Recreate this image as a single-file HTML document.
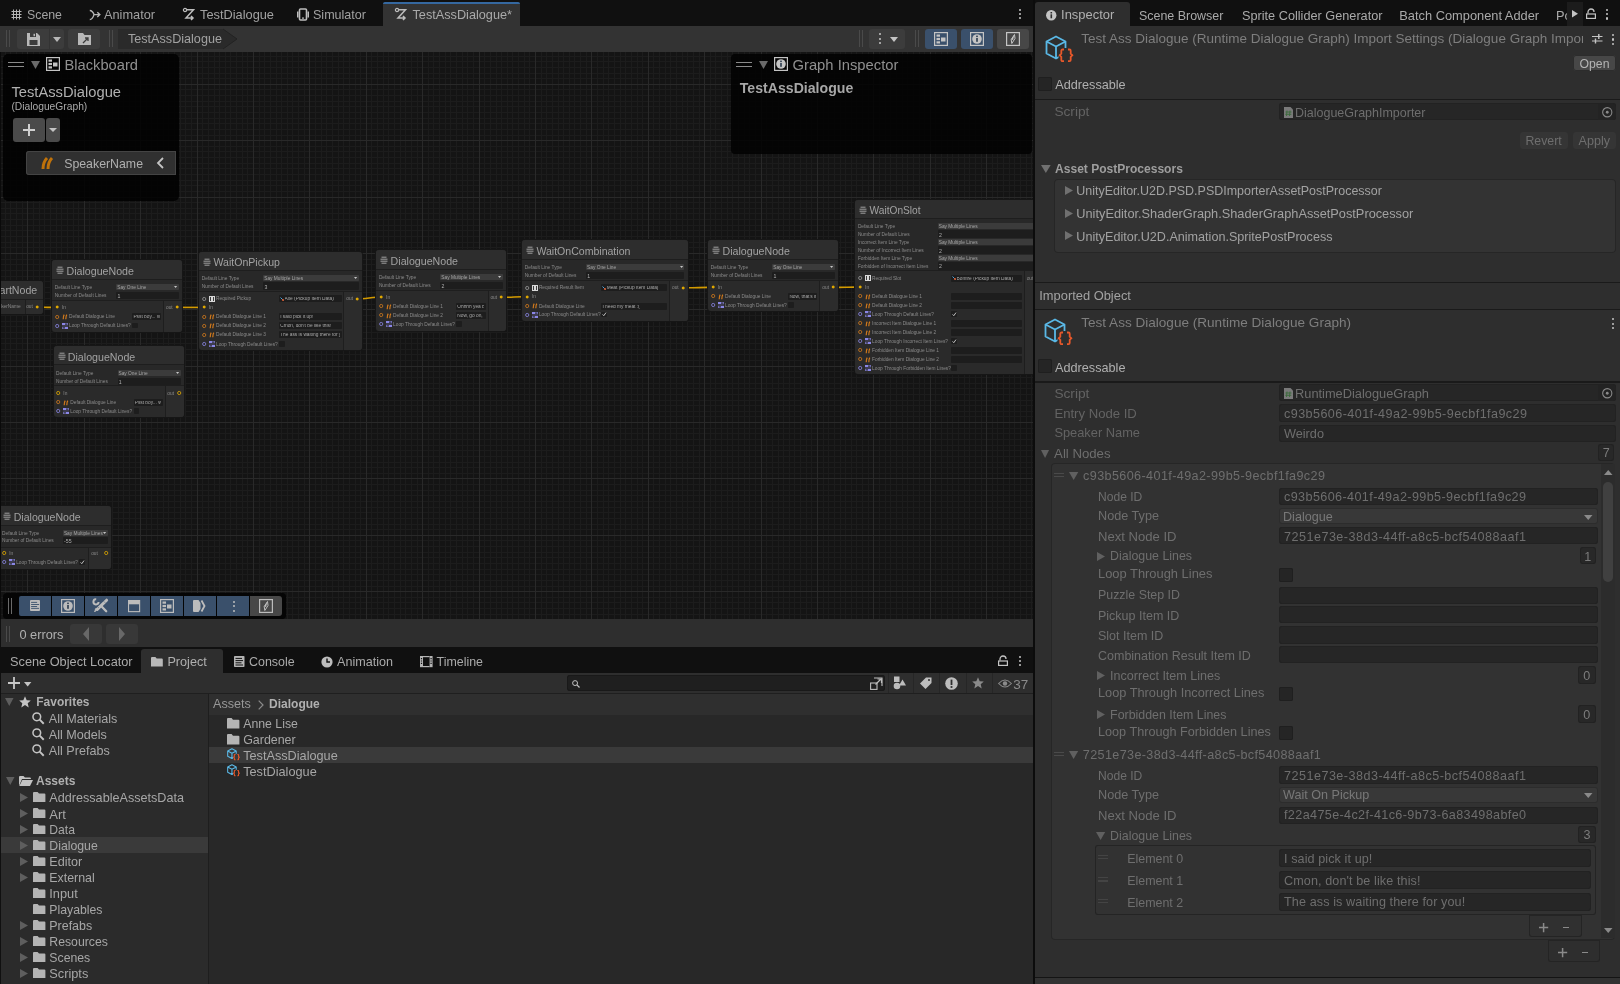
<!DOCTYPE html><html><head><meta charset="utf-8"><style>
html,body{margin:0;padding:0;width:1620px;height:984px;overflow:hidden;background:#101010}
.a{position:absolute;box-sizing:border-box}
.t{position:absolute;white-space:nowrap;font-family:"Liberation Sans",sans-serif}
svg.a{overflow:visible}
</style></head><body>
<div class="a" style="left:0;top:0;width:1620px;height:984px;overflow:hidden;will-change:transform">
<div class="a" style="left:0px;top:0px;width:1033px;height:26px;background:#101010;"></div>
<div class="a" style="left:383px;top:2px;width:137px;height:24px;background:#333333;border-radius:3px 3px 0 0;"></div>
<div class="a" style="left:383px;top:2px;width:137px;height:1.8px;background:#3568a0;border-radius:3px 3px 0 0;"></div>
<div class="t" style="top:9.40px;font-size:12.34px;line-height:12.34px;color:#a2a2a2;left:27px;">Scene</div>
<div class="t" style="top:9.08px;font-size:12.75px;line-height:12.75px;color:#a2a2a2;left:104px;">Animator</div>
<div class="t" style="top:9.04px;font-size:12.8px;line-height:12.8px;color:#a2a2a2;left:200px;">TestDialogue</div>
<div class="t" style="top:9.24px;font-size:12.55px;line-height:12.55px;color:#a2a2a2;left:313px;">Simulator</div>
<div class="t" style="top:9.12px;font-size:12.7px;line-height:12.7px;color:#aaaaaa;left:412.5px;">TestAssDialogue*</div>
<svg class="a" style="left:11px;top:9px;" width="11" height="11" viewBox="0 0 11 11"><path d="M2.5 0.5v10M5.5 0.5v10M8.5 0.5v10M0.5 2.5h10M0.5 5.5h10M0.5 8.5h10" stroke="#b4b4b4" stroke-width="1" fill="none"/></svg>
<svg class="a" style="left:89px;top:9px;" width="12" height="12" viewBox="0 0 12 12"><path d="M0.8 1.5Q3.5 1.5 5 5.6H10.5M0.8 10.5Q3.5 10.5 5 5.6M8.3 3.3 10.8 5.6 8.3 7.9" stroke="#b4b4b4" stroke-width="1.4" fill="none"/></svg>
<svg class="a" style="left:183px;top:8px;" width="12" height="13" viewBox="0 0 12 13"><circle cx="2" cy="2" r="1.6" stroke="#bdbdbd" stroke-width="1.2" fill="none"/><path d="M4 1.8h6.5L3 10h6.5M8 8l2 2-2 2" stroke="#bdbdbd" stroke-width="1.5" fill="none"/></svg>
<svg class="a" style="left:395px;top:8px;" width="12" height="13" viewBox="0 0 12 13"><circle cx="2" cy="2" r="1.6" stroke="#bdbdbd" stroke-width="1.2" fill="none"/><path d="M4 1.8h6.5L3 10h6.5M8 8l2 2-2 2" stroke="#bdbdbd" stroke-width="1.5" fill="none"/></svg>
<svg class="a" style="left:297px;top:8px;" width="12" height="13" viewBox="0 0 12 13"><rect x="2.5" y="1" width="7" height="11" rx="1" stroke="#bdbdbd" stroke-width="1.6" fill="none"/><rect x="0" y="3.5" width="1.5" height="6" fill="#bdbdbd"/><rect x="10.5" y="3.5" width="1.5" height="6" fill="#bdbdbd"/><rect x="5" y="9.5" width="2" height="1.2" fill="#bdbdbd"/></svg>
<div class="a" style="left:1018.5px;top:9px;width:2.2px;height:2.2px;background:#c4c4c4;border-radius:1px;"></div>
<div class="a" style="left:1018.5px;top:13px;width:2.2px;height:2.2px;background:#c4c4c4;border-radius:1px;"></div>
<div class="a" style="left:1018.5px;top:17px;width:2.2px;height:2.2px;background:#c4c4c4;border-radius:1px;"></div>
<div class="a" style="left:0px;top:26px;width:1033px;height:26px;background:#333333;"></div>
<div class="a" style="left:6px;top:30px;width:1px;height:17px;background:#4a4a4a;"></div>
<div class="a" style="left:9px;top:30px;width:1px;height:17px;background:#4a4a4a;"></div>
<div class="a" style="left:17px;top:29px;width:32px;height:20px;background:#3c3c3c;border-radius:3px 0 0 3px;"></div>
<div class="a" style="left:50px;top:29px;width:14px;height:20px;background:#3c3c3c;border-radius:0 3px 3px 0;"></div>
<div class="a" style="left:68px;top:29px;width:32px;height:20px;background:#3c3c3c;border-radius:3px;"></div>
<svg class="a" style="left:27px;top:33px;" width="13" height="13" viewBox="0 0 13 13"><path d="M0 0h10l3 3v10H0z" fill="#b8b8b8"/><rect x="3" y="0" width="6" height="4" fill="#3c3c3c"/><rect x="6.5" y="0.8" width="1.5" height="2.4" fill="#b8b8b8"/><rect x="2.5" y="7" width="8" height="5" fill="#3c3c3c"/></svg>
<svg class="a" style="left:53px;top:37px;" width="8" height="5" viewBox="0 0 8 5"><path d="M0 0h8L4 5z" fill="#b8b8b8"/></svg>
<svg class="a" style="left:78px;top:33px;" width="13" height="12" viewBox="0 0 13 12"><path d="M0 0h5l1.5 2H13v10H0z" fill="#b8b8b8"/><path d="M5 10 10 5M7 5h3v3" stroke="#3c3c3c" stroke-width="1.3" fill="none"/></svg>
<div class="a" style="left:109px;top:30px;width:1px;height:17px;background:#4a4a4a;"></div>
<div class="a" style="left:112px;top:30px;width:1px;height:17px;background:#4a4a4a;"></div>
<svg class="a" style="left:118px;top:29px;" width="120" height="20" viewBox="0 0 120 20"><path d="M0 0h105l14 10-14 10H0z" fill="#2a2a2a"/><path d="M105 0l14 10-14 10" stroke="#222" fill="none"/></svg>
<div class="t" style="top:33.28px;font-size:12.62px;line-height:12.62px;color:#a2a2a2;left:128px;">TestAssDialogue</div>
<div class="a" style="left:859px;top:30px;width:1px;height:17px;background:#4a4a4a;"></div>
<div class="a" style="left:862px;top:30px;width:1px;height:17px;background:#4a4a4a;"></div>
<div class="a" style="left:869px;top:29px;width:36px;height:20px;background:#3c3c3c;border-radius:3px;"></div>
<div class="a" style="left:879px;top:33px;width:2.2px;height:2.2px;background:#c4c4c4;border-radius:1px;"></div>
<div class="a" style="left:879px;top:37.5px;width:2.2px;height:2.2px;background:#c4c4c4;border-radius:1px;"></div>
<div class="a" style="left:879px;top:42px;width:2.2px;height:2.2px;background:#c4c4c4;border-radius:1px;"></div>
<svg class="a" style="left:890px;top:37px;" width="8" height="5" viewBox="0 0 8 5"><path d="M0 0h8L4 5z" fill="#c4c4c4"/></svg>
<div class="a" style="left:915px;top:30px;width:1px;height:17px;background:#4a4a4a;"></div>
<div class="a" style="left:918px;top:30px;width:1px;height:17px;background:#4a4a4a;"></div>
<div class="a" style="left:925px;top:29px;width:32px;height:20px;background:#3a506b;border-radius:3px;"></div>
<div class="a" style="left:961px;top:29px;width:32px;height:20px;background:#3a506b;border-radius:3px;"></div>
<div class="a" style="left:997px;top:29px;width:32px;height:20px;background:#474747;border-radius:3px;"></div>
<svg class="a" style="left:934px;top:32px;" width="14" height="14" viewBox="0 0 14 14"><g transform="scale(1.0)"><rect x="0.6" y="0.6" width="12.8" height="12.8" stroke="#c4c4c4" stroke-width="1.2" fill="none"/><rect x="2.5" y="2.5" width="3.5" height="2.2" fill="#c4c4c4"/><rect x="2.5" y="5.9" width="3.5" height="2.2" fill="#c4c4c4"/><rect x="2.5" y="9.3" width="3.5" height="2.2" fill="#c4c4c4"/><rect x="7" y="5.5" width="4.5" height="4" fill="#c4c4c4"/></g></svg>
<svg class="a" style="left:970px;top:32px;" width="14" height="14" viewBox="0 0 14 14"><g transform="scale(1.0)"><rect x="0.6" y="0.6" width="12.8" height="12.8" stroke="#c4c4c4" stroke-width="1.2" fill="none"/><circle cx="7" cy="7" r="4.8" fill="#c4c4c4"/><rect x="6.2" y="6" width="1.6" height="3.8" fill="#2a3a4c"/><rect x="6.2" y="3.6" width="1.6" height="1.5" fill="#2a3a4c"/></g></svg>
<svg class="a" style="left:1006px;top:32px;" width="14" height="14" viewBox="0 0 14 14"><g transform="scale(1.0)"><rect x="0.6" y="0.6" width="12.8" height="12.8" stroke="#c4c4c4" stroke-width="1.2" fill="none"/><path d="M8.5 2.5 5.2 7.5 5.8 11.5 9 6.5z" fill="none" stroke="#c4c4c4" stroke-width="1"/><path d="M8.5 2.5 5.2 7.5 7 8z" fill="#c4c4c4"/></g></svg>
<svg class="a" style="left:1px;top:52px;shape-rendering:crispEdges;" width="1032" height="567" viewBox="0 0 1032 567"><rect x="0" y="0" width="1032" height="567" fill="#141414"/><path fill="#1c1c1c" d="M4 0h1v567h-1zM9 0h1v567h-1zM15 0h1v567h-1zM21 0h1v567h-1zM32 0h1v567h-1zM38 0h1v567h-1zM43 0h1v567h-1zM49 0h1v567h-1zM55 0h1v567h-1zM60 0h1v567h-1zM66 0h1v567h-1zM72 0h1v567h-1zM77 0h1v567h-1zM88 0h1v567h-1zM94 0h1v567h-1zM100 0h1v567h-1zM105 0h1v567h-1zM111 0h1v567h-1zM117 0h1v567h-1zM122 0h1v567h-1zM128 0h1v567h-1zM134 0h1v567h-1zM145 0h1v567h-1zM150 0h1v567h-1zM156 0h1v567h-1zM162 0h1v567h-1zM167 0h1v567h-1zM173 0h1v567h-1zM179 0h1v567h-1zM184 0h1v567h-1zM190 0h1v567h-1zM201 0h1v567h-1zM207 0h1v567h-1zM213 0h1v567h-1zM218 0h1v567h-1zM224 0h1v567h-1zM229 0h1v567h-1zM235 0h1v567h-1zM241 0h1v567h-1zM246 0h1v567h-1zM258 0h1v567h-1zM263 0h1v567h-1zM269 0h1v567h-1zM275 0h1v567h-1zM280 0h1v567h-1zM286 0h1v567h-1zM291 0h1v567h-1zM297 0h1v567h-1zM303 0h1v567h-1zM314 0h1v567h-1zM320 0h1v567h-1zM325 0h1v567h-1zM331 0h1v567h-1zM337 0h1v567h-1zM342 0h1v567h-1zM348 0h1v567h-1zM354 0h1v567h-1zM359 0h1v567h-1zM370 0h1v567h-1zM376 0h1v567h-1zM382 0h1v567h-1zM387 0h1v567h-1zM393 0h1v567h-1zM399 0h1v567h-1zM404 0h1v567h-1zM410 0h1v567h-1zM416 0h1v567h-1zM427 0h1v567h-1zM432 0h1v567h-1zM438 0h1v567h-1zM444 0h1v567h-1zM449 0h1v567h-1zM455 0h1v567h-1zM461 0h1v567h-1zM466 0h1v567h-1zM472 0h1v567h-1zM483 0h1v567h-1zM489 0h1v567h-1zM495 0h1v567h-1zM500 0h1v567h-1zM506 0h1v567h-1zM511 0h1v567h-1zM517 0h1v567h-1zM523 0h1v567h-1zM528 0h1v567h-1zM540 0h1v567h-1zM545 0h1v567h-1zM551 0h1v567h-1zM557 0h1v567h-1zM562 0h1v567h-1zM568 0h1v567h-1zM573 0h1v567h-1zM579 0h1v567h-1zM585 0h1v567h-1zM596 0h1v567h-1zM602 0h1v567h-1zM607 0h1v567h-1zM613 0h1v567h-1zM619 0h1v567h-1zM624 0h1v567h-1zM630 0h1v567h-1zM636 0h1v567h-1zM641 0h1v567h-1zM652 0h1v567h-1zM658 0h1v567h-1zM664 0h1v567h-1zM669 0h1v567h-1zM675 0h1v567h-1zM681 0h1v567h-1zM686 0h1v567h-1zM692 0h1v567h-1zM698 0h1v567h-1zM709 0h1v567h-1zM714 0h1v567h-1zM720 0h1v567h-1zM726 0h1v567h-1zM731 0h1v567h-1zM737 0h1v567h-1zM743 0h1v567h-1zM748 0h1v567h-1zM754 0h1v567h-1zM765 0h1v567h-1zM771 0h1v567h-1zM777 0h1v567h-1zM782 0h1v567h-1zM788 0h1v567h-1zM793 0h1v567h-1zM799 0h1v567h-1zM805 0h1v567h-1zM810 0h1v567h-1zM822 0h1v567h-1zM827 0h1v567h-1zM833 0h1v567h-1zM839 0h1v567h-1zM844 0h1v567h-1zM850 0h1v567h-1zM855 0h1v567h-1zM861 0h1v567h-1zM867 0h1v567h-1zM878 0h1v567h-1zM884 0h1v567h-1zM889 0h1v567h-1zM895 0h1v567h-1zM901 0h1v567h-1zM906 0h1v567h-1zM912 0h1v567h-1zM918 0h1v567h-1zM923 0h1v567h-1zM934 0h1v567h-1zM940 0h1v567h-1zM946 0h1v567h-1zM951 0h1v567h-1zM957 0h1v567h-1zM963 0h1v567h-1zM968 0h1v567h-1zM974 0h1v567h-1zM980 0h1v567h-1zM991 0h1v567h-1zM996 0h1v567h-1zM1002 0h1v567h-1zM1008 0h1v567h-1zM1013 0h1v567h-1zM1019 0h1v567h-1zM1025 0h1v567h-1zM1030 0h1v567h-1zM0 4h1032v1h-1032zM0 9h1032v1h-1032zM0 15h1032v1h-1032zM0 21h1032v1h-1032zM0 26h1032v1h-1032zM0 37h1032v1h-1032zM0 43h1032v1h-1032zM0 49h1032v1h-1032zM0 54h1032v1h-1032zM0 60h1032v1h-1032zM0 66h1032v1h-1032zM0 71h1032v1h-1032zM0 77h1032v1h-1032zM0 83h1032v1h-1032zM0 94h1032v1h-1032zM0 99h1032v1h-1032zM0 105h1032v1h-1032zM0 111h1032v1h-1032zM0 116h1032v1h-1032zM0 122h1032v1h-1032zM0 128h1032v1h-1032zM0 133h1032v1h-1032zM0 139h1032v1h-1032zM0 150h1032v1h-1032zM0 156h1032v1h-1032zM0 161h1032v1h-1032zM0 167h1032v1h-1032zM0 173h1032v1h-1032zM0 178h1032v1h-1032zM0 184h1032v1h-1032zM0 190h1032v1h-1032zM0 195h1032v1h-1032zM0 207h1032v1h-1032zM0 212h1032v1h-1032zM0 218h1032v1h-1032zM0 224h1032v1h-1032zM0 229h1032v1h-1032zM0 235h1032v1h-1032zM0 240h1032v1h-1032zM0 246h1032v1h-1032zM0 252h1032v1h-1032zM0 263h1032v1h-1032zM0 269h1032v1h-1032zM0 274h1032v1h-1032zM0 280h1032v1h-1032zM0 286h1032v1h-1032zM0 291h1032v1h-1032zM0 297h1032v1h-1032zM0 302h1032v1h-1032zM0 308h1032v1h-1032zM0 319h1032v1h-1032zM0 325h1032v1h-1032zM0 331h1032v1h-1032zM0 336h1032v1h-1032zM0 342h1032v1h-1032zM0 348h1032v1h-1032zM0 353h1032v1h-1032zM0 359h1032v1h-1032zM0 364h1032v1h-1032zM0 376h1032v1h-1032zM0 381h1032v1h-1032zM0 387h1032v1h-1032zM0 393h1032v1h-1032zM0 398h1032v1h-1032zM0 404h1032v1h-1032zM0 410h1032v1h-1032zM0 415h1032v1h-1032zM0 421h1032v1h-1032zM0 432h1032v1h-1032zM0 438h1032v1h-1032zM0 443h1032v1h-1032zM0 449h1032v1h-1032zM0 455h1032v1h-1032zM0 460h1032v1h-1032zM0 466h1032v1h-1032zM0 472h1032v1h-1032zM0 477h1032v1h-1032zM0 488h1032v1h-1032zM0 494h1032v1h-1032zM0 500h1032v1h-1032zM0 505h1032v1h-1032zM0 511h1032v1h-1032zM0 517h1032v1h-1032zM0 522h1032v1h-1032zM0 528h1032v1h-1032zM0 534h1032v1h-1032zM0 545h1032v1h-1032zM0 550h1032v1h-1032zM0 556h1032v1h-1032zM0 562h1032v1h-1032z"/><path fill="#292929" d="M26 0h1v567h-1zM83 0h1v567h-1zM139 0h1v567h-1zM196 0h1v567h-1zM252 0h1v567h-1zM308 0h1v567h-1zM365 0h1v567h-1zM421 0h1v567h-1zM478 0h1v567h-1zM534 0h1v567h-1zM590 0h1v567h-1zM647 0h1v567h-1zM703 0h1v567h-1zM760 0h1v567h-1zM816 0h1v567h-1zM872 0h1v567h-1zM929 0h1v567h-1zM985 0h1v567h-1zM0 32h1032v1h-1032zM0 88h1032v1h-1032zM0 145h1032v1h-1032zM0 201h1032v1h-1032zM0 257h1032v1h-1032zM0 314h1032v1h-1032zM0 370h1032v1h-1032zM0 426h1032v1h-1032zM0 483h1032v1h-1032zM0 539h1032v1h-1032z"/></svg>
<div class="a" style="left:0px;top:52px;width:1px;height:567px;background:#0a0a0a;"></div>
<div class="a" style="left:3px;top:54px;width:176px;height:147px;background:rgba(1,1,1,0.88);border-radius:5px;"></div>
<div class="a" style="left:8px;top:62px;width:16px;height:1.3px;background:#8a8a8a;"></div>
<div class="a" style="left:8px;top:65.5px;width:16px;height:1.3px;background:#8a8a8a;"></div>
<svg class="a" style="left:31px;top:61px;" width="9" height="8" viewBox="0 0 9 8"><path d="M0 0h9L4.5 8z" fill="#6a6a6a"/></svg>
<svg class="a" style="left:46px;top:57px;" width="14" height="14" viewBox="0 0 14 14"><g transform="scale(1.0)"><rect x="0.6" y="0.6" width="12.8" height="12.8" stroke="#c4c4c4" stroke-width="1.2" fill="none"/><rect x="2.5" y="2.5" width="3.5" height="2.2" fill="#c4c4c4"/><rect x="2.5" y="5.9" width="3.5" height="2.2" fill="#c4c4c4"/><rect x="2.5" y="9.3" width="3.5" height="2.2" fill="#c4c4c4"/><rect x="7" y="5.5" width="4.5" height="4" fill="#c4c4c4"/></g></svg>
<div class="t" style="top:58.49px;font-size:14.69px;line-height:14.69px;color:#909090;left:64.5px;">Blackboard</div>
<div class="t" style="top:85.16px;font-size:14.73px;line-height:14.73px;color:#b0b0b0;left:11.4px;">TestAssDialogue</div>
<div class="t" style="top:101.88px;font-size:10.28px;line-height:10.28px;color:#aaaaaa;left:11.4px;">(DialogueGraph)</div>
<div class="a" style="left:13px;top:118px;width:32px;height:24px;background:#4a4a4a;border-radius:3px;"></div>
<div class="a" style="left:46px;top:118px;width:14px;height:24px;background:#4a4a4a;border-radius:3px;"></div>
<svg class="a" style="left:22px;top:123px;" width="14" height="14" viewBox="0 0 14 14"><path d="M7 1v12M1 7h12" stroke="#d0d0d0" stroke-width="2"/></svg>
<svg class="a" style="left:49px;top:128px;" width="8" height="4" viewBox="0 0 8 4"><path d="M0 0h8L4 4z" fill="#c4c4c4"/></svg>
<div class="a" style="left:26px;top:151px;width:150px;height:24px;background:#303030;box-shadow:inset 0 0 0 1px #444;border-radius:3px 0 0 3px;"></div>
<svg class="a" style="left:40px;top:157px;" width="13" height="12" viewBox="0 0 13 12"><path d="M3 12c0-5 1-8 4-11M8 12c0-5 1-8 4-11" stroke="#c0720a" stroke-width="3" fill="none"/></svg>
<div class="t" style="top:157.71px;font-size:12.33px;line-height:12.33px;color:#b0b0b0;left:64.2px;">SpeakerName</div>
<svg class="a" style="left:156px;top:157px;" width="8" height="12" viewBox="0 0 8 12"><path d="M7 1 2 6l5 5" stroke="#c4c4c4" stroke-width="1.8" fill="none"/></svg>
<div class="a" style="left:731px;top:54px;width:301px;height:100px;background:rgba(2,2,2,0.87);border-radius:4px;"></div>
<div class="a" style="left:736px;top:62px;width:16px;height:1.3px;background:#8a8a8a;"></div>
<div class="a" style="left:736px;top:66px;width:16px;height:1.3px;background:#8a8a8a;"></div>
<svg class="a" style="left:759px;top:61px;" width="9" height="8" viewBox="0 0 9 8"><path d="M0 0h9L4.5 8z" fill="#6a6a6a"/></svg>
<svg class="a" style="left:774px;top:57px;" width="14" height="14" viewBox="0 0 14 14"><g transform="scale(1.0)"><rect x="0.6" y="0.6" width="12.8" height="12.8" stroke="#c4c4c4" stroke-width="1.2" fill="none"/><circle cx="7" cy="7" r="4.8" fill="#c4c4c4"/><rect x="6.2" y="6" width="1.6" height="3.8" fill="#2a3a4c"/><rect x="6.2" y="3.6" width="1.6" height="1.5" fill="#2a3a4c"/></g></svg>
<div class="t" style="top:58.43px;font-size:14.77px;line-height:14.77px;color:#909090;left:792.5px;">Graph Inspector</div>
<div class="t" style="top:81.43px;font-size:14.12px;line-height:14.12px;color:#a7a7a7;left:739.8px;font-weight:700;">TestAssDialogue</div>
<div class="a" style="left:3px;top:593px;width:283px;height:26px;background:#050505;border-radius:4px;"></div>
<div class="a" style="left:8px;top:598px;width:1px;height:16px;background:#6a6a6a;"></div>
<div class="a" style="left:11px;top:598px;width:1px;height:16px;background:#6a6a6a;"></div>
<div class="a" style="left:19px;top:596px;width:32px;height:20px;background:#3a506b;border-radius:2px 0 0 2px;"></div>
<div class="a" style="left:52px;top:596px;width:32px;height:20px;background:#3a506b;border-radius:0;"></div>
<div class="a" style="left:85px;top:596px;width:32px;height:20px;background:#3a506b;border-radius:0;"></div>
<div class="a" style="left:118px;top:596px;width:32px;height:20px;background:#3a506b;border-radius:0;"></div>
<div class="a" style="left:151px;top:596px;width:32px;height:20px;background:#3a506b;border-radius:0;"></div>
<div class="a" style="left:184px;top:596px;width:32px;height:20px;background:#3a506b;border-radius:0;"></div>
<div class="a" style="left:217px;top:596px;width:32px;height:20px;background:#3a506b;border-radius:0;"></div>
<div class="a" style="left:250px;top:596px;width:32px;height:20px;background:#474747;border-radius:0 3px 3px 0;"></div>
<svg class="a" style="left:30px;top:600px;" width="10" height="11" viewBox="0 0 10 11"><rect x="0" y="0" width="10" height="11" rx="1" fill="#bcbcbc"/><path d="M1.1 2.4h6M1.1 4.5h8M1.1 6.5h6M1.1 8.4h8" stroke="#3a506b" stroke-width="0.9"/></svg>
<svg class="a" style="left:61px;top:599px;" width="14" height="14" viewBox="0 0 14 14"><g transform="scale(1.0)"><rect x="0.6" y="0.6" width="12.8" height="12.8" stroke="#bcbcbc" stroke-width="1.2" fill="none"/><circle cx="7" cy="7" r="4.8" fill="#bcbcbc"/><rect x="6.2" y="6" width="1.6" height="3.8" fill="#2a3a4c"/><rect x="6.2" y="3.6" width="1.6" height="1.5" fill="#2a3a4c"/></g></svg>
<svg class="a" style="left:93px;top:598px;" width="15" height="15" viewBox="0 0 15 15"><path d="M3.2 1.2A2.6 2.6 0 1 0 5.6 4.0" stroke="#bcbcbc" stroke-width="2" fill="none"/><path d="M8.4 8.2 13.2 13.2" stroke="#bcbcbc" stroke-width="2.3" stroke-linecap="round"/><path d="M13.6 2.2 4.2 11.4" stroke="#bcbcbc" stroke-width="3" stroke-linecap="round"/><path d="M4.2 11.4 1.6 14 2.6 10.6z" fill="#bcbcbc" stroke="#bcbcbc" stroke-width="0.8"/><path d="M12 4.6 11 3.6M5.6 9.8 4.6 8.8" stroke="#3a506b" stroke-width="0.7"/></svg>
<svg class="a" style="left:128px;top:600px;" width="12.2" height="12.2" viewBox="0 0 12.2 12.2"><rect x="0.55" y="0.55" width="11.1" height="11.1" stroke="#bcbcbc" stroke-width="1.1" fill="none"/><rect x="0.5" y="0.5" width="11.2" height="3.8" fill="#bcbcbc"/></svg>
<svg class="a" style="left:160px;top:599px;" width="14" height="14" viewBox="0 0 14 14"><g transform="scale(1.0)"><rect x="0.6" y="0.6" width="12.8" height="12.8" stroke="#bcbcbc" stroke-width="1.2" fill="none"/><rect x="2.5" y="2.5" width="3.5" height="2.2" fill="#bcbcbc"/><rect x="2.5" y="5.9" width="3.5" height="2.2" fill="#bcbcbc"/><rect x="2.5" y="9.3" width="3.5" height="2.2" fill="#bcbcbc"/><rect x="7" y="5.5" width="4.5" height="4" fill="#bcbcbc"/></g></svg>
<svg class="a" style="left:193px;top:600px;" width="13" height="12" viewBox="0 0 13 12"><path d="M1 0h4.5l2 3v6l-2 3H1a1 1 0 0 1-1-1V1a1 1 0 0 1 1-1z" fill="#bcbcbc"/><path d="M8.5 0.5 11.5 6l-3 5.5" stroke="#bcbcbc" stroke-width="1.8" fill="none"/></svg>
<div class="a" style="left:232.5px;top:601px;width:2.3px;height:2.3px;background:#bcbcbc;border-radius:1px;"></div>
<div class="a" style="left:232.5px;top:605px;width:2.3px;height:2.3px;background:#bcbcbc;border-radius:1px;"></div>
<div class="a" style="left:232.5px;top:609.5px;width:2.3px;height:2.3px;background:#bcbcbc;border-radius:1px;"></div>
<svg class="a" style="left:259px;top:599px;" width="14" height="14" viewBox="0 0 14 14"><g transform="scale(1.0)"><rect x="0.6" y="0.6" width="12.8" height="12.8" stroke="#bcbcbc" stroke-width="1.2" fill="none"/><path d="M8.5 2.5 5.2 7.5 5.8 11.5 9 6.5z" fill="none" stroke="#bcbcbc" stroke-width="1"/><path d="M8.5 2.5 5.2 7.5 7 8z" fill="#bcbcbc"/></g></svg>
<div class="a" style="left:1px;top:619px;width:1032px;height:28px;background:#2e2e2e;"></div>
<div class="a" style="left:6px;top:626px;width:1px;height:16px;background:#4a4a4a;"></div>
<div class="a" style="left:9px;top:626px;width:1px;height:16px;background:#4a4a4a;"></div>
<div class="t" style="top:628.77px;font-size:12.77px;line-height:12.77px;color:#b0b0b0;left:19.4px;">0 errors</div>
<div class="a" style="left:70px;top:624px;width:32px;height:20px;background:#383838;border-radius:3px;"></div>
<div class="a" style="left:106px;top:624px;width:32px;height:20px;background:#383838;border-radius:3px;"></div>
<svg class="a" style="left:83px;top:627px;" width="6" height="14" viewBox="0 0 6 14"><path d="M6 0v14L0 7z" fill="#686868"/></svg>
<svg class="a" style="left:119px;top:627px;" width="6" height="14" viewBox="0 0 6 14"><path d="M0 0v14l6-7z" fill="#686868"/></svg>
<div class="a" style="left:1033px;top:0px;width:2px;height:984px;background:#0c0c0c;"></div>
<div class="a" style="left:1px;top:52px;width:1032px;height:567px;overflow:hidden">
<div class="a" style="left:-1px;top:-52px;width:1620px;height:984px">
<svg class="a" style="left:0px;top:0px;width:1px;height:1px;" width="1" height="1" viewBox="0 0 1 1"><path d="M42.7 307.3 C47.6 307.3 47.6 307.4 52.5 307.4" stroke="#d49b00" stroke-width="1.6" fill="none"/></svg>
<svg class="a" style="left:0px;top:0px;width:1px;height:1px;" width="1" height="1" viewBox="0 0 1 1"><path d="M182 307.4 C190.75 307.4 190.75 307.4 199.5 307.4" stroke="#d49b00" stroke-width="1.6" fill="none"/></svg>
<svg class="a" style="left:0px;top:0px;width:1px;height:1px;" width="1" height="1" viewBox="0 0 1 1"><path d="M361.8 298.7 C369.15 298.7 369.15 297.3 376.5 297.3" stroke="#d49b00" stroke-width="1.6" fill="none"/></svg>
<svg class="a" style="left:0px;top:0px;width:1px;height:1px;" width="1" height="1" viewBox="0 0 1 1"><path d="M505.9 297.3 C514.0999999999999 297.3 514.0999999999999 296.7 522.3 296.7" stroke="#d49b00" stroke-width="1.6" fill="none"/></svg>
<svg class="a" style="left:0px;top:0px;width:1px;height:1px;" width="1" height="1" viewBox="0 0 1 1"><path d="M687.7 287.8 C698.1 287.8 698.1 287.4 708.5 287.4" stroke="#d49b00" stroke-width="1.6" fill="none"/></svg>
<svg class="a" style="left:0px;top:0px;width:1px;height:1px;" width="1" height="1" viewBox="0 0 1 1"><path d="M837.9 287.4 C846.7 287.4 846.7 287.1 855.5 287.1" stroke="#d49b00" stroke-width="1.6" fill="none"/></svg>
<div class="a" style="left:-40px;top:281.3px;width:82.7px;height:32.3px;border-radius:3px;background:#2a2a2a;box-shadow:0 0 0 1px #161616;overflow:hidden"><div class="a" style="left:0;top:0;width:82.7px;height:19.2px;background:#2d2d2d;border-bottom:1px solid #1e1e1e"></div><div class="a" style="left:65.3px;top:19.2px;width:20px;height:14px;background:#2c2c2c;border-left:1px solid #1e1e1e"></div></div>
<div class="t" style="top:285.44px;font-size:10.6px;line-height:10.6px;color:#a2a2a2;left:-10.5px;">StartNode</div>
<div class="t" style="top:305.30px;font-size:4.8px;line-height:4.8px;color:#8b8b8b;left:-10px;">SpeakerName</div>
<div class="t" style="top:305.30px;font-size:4.8px;line-height:4.8px;color:#8b8b8b;left:26.2px;">out</div>
<svg class="a" style="left:35.3px;top:305.2px;" width="4.4" height="4" viewBox="0 0 4.4 4"><circle cx="2.2" cy="2" r="1.5" fill="#e0a800"/></svg>
<div class="a" style="left:52.2px;top:260.2px;width:129.8px;height:71.6px;border-radius:3px;background:#2a2a2a;box-shadow:0 0 0 1px #161616;overflow:hidden">
<div class="a" style="left:0;top:0;width:129.8px;height:19.8px;background:#2d2d2d;border-bottom:1px solid #1e1e1e"></div>
<div class="a" style="left:0;top:19.8px;width:129.8px;height:20.999999999999996px;background:#282828;border-bottom:1px solid #1e1e1e"></div>
<div class="a" style="left:111px;top:40.8px;width:18.80000000000001px;height:30.799999999999997px;background:#2c2c2c;border-left:1px solid #1e1e1e"></div>
</div>
<svg class="a" style="left:56.2px;top:266.2px;" width="8" height="8" viewBox="0 0 8 8"><path d="M1.5 1.2h5M0.5 3.2h7M0.5 5.2h7M1.5 7.2h5" stroke="#a0a0a0" stroke-width="1" fill="none"/></svg>
<div class="t" style="top:265.90px;font-size:10.65px;line-height:10.65px;color:#a2a2a2;left:66.5px;">DialogueNode</div>
<div class="t" style="top:286.00px;font-size:4.8px;line-height:4.8px;color:#8b8b8b;left:54.8px;">Default Line Type</div>
<div class="a" style="left:116.2px;top:284.0px;width:62.60000000000001px;height:6.2px;background:#3b3b3b;border-radius:1px;"></div>
<div class="t" style="top:286.00px;font-size:4.8px;line-height:4.8px;color:#a6a6a6;left:117.2px;">Say One Line</div>
<svg class="a" style="left:173.8px;top:286.2px;" width="3.2" height="2" viewBox="0 0 3.2 2"><path d="M0 0h3.2L1.6 2z" fill="#c4c4c4"/></svg>
<div class="t" style="top:294.30px;font-size:4.8px;line-height:4.8px;color:#8b8b8b;left:54.8px;">Number of Default Lines</div>
<div class="a" style="left:116.2px;top:291.9px;width:62.60000000000001px;height:7.4px;background:#1d1d1d;border-radius:1px;"></div>
<div class="t" style="top:294.10px;font-size:5.2px;line-height:5.2px;color:#b0b0b0;left:117.4px;">1</div>
<svg class="a" style="left:54.9px;top:305.4px;" width="4.4" height="4" viewBox="0 0 4.4 4"><circle cx="2.2" cy="2" r="1.5" fill="#e0a800"/></svg>
<div class="t" style="top:305.90px;font-size:4.8px;line-height:4.8px;color:#8b8b8b;left:62.0px;">In</div>
<svg class="a" style="left:54.9px;top:314.6px;" width="4.4" height="4" viewBox="0 0 4.4 4"><circle cx="2.2" cy="2" r="1.6" fill="none" stroke="#d27a1c" stroke-width="0.8"/></svg>
<svg class="a" style="left:62.0px;top:314.0px;" width="5" height="5.2" viewBox="0 0 5 5.2"><path d="M1.2 5.2 Q1.2 2.2 2.2 0.6M3.8 5.2Q3.8 2.2 4.8 0.6" stroke="#d27a1c" stroke-width="1.2" fill="none"/></svg>
<div class="t" style="top:315.10px;font-size:4.8px;line-height:4.8px;color:#8b8b8b;left:69.0px;">Default Dialogue Line</div>
<div class="a" style="left:132.2px;top:313.2px;width:29px;height:7px;background:#1d1d1d;border-radius:1px;"></div>
<div class="t" style="top:315.10px;font-size:4.8px;line-height:4.8px;color:#aaaaaa;left:133.4px;width:26.5px;overflow:hidden;">Psst boy... W</div>
<svg class="a" style="left:54.9px;top:323.7px;" width="4.4" height="4" viewBox="0 0 4.4 4"><circle cx="2.2" cy="2" r="1.6" fill="none" stroke="#8a86e6" stroke-width="0.8"/></svg>
<svg class="a" style="left:62.0px;top:322.7px;" width="6" height="6" viewBox="0 0 6 6"><rect x="0" y="0" width="6" height="2.2" fill="#8a86e6"/><rect x="0" y="3.8" width="6" height="2.2" fill="#8a86e6"/><rect x="3" y="0.5" width="2.5" height="1.2" fill="#2a2a2a"/><rect x="0.5" y="4.3" width="2.5" height="1.2" fill="#2a2a2a"/></svg>
<div class="t" style="top:324.20px;font-size:4.8px;line-height:4.8px;color:#8b8b8b;left:69.0px;">Loop Through Default Lines?</div>
<div class="a" style="left:132.2px;top:322.7px;width:5.5px;height:5.5px;background:#1d1d1d;border-radius:1px;"></div>
<div class="t" style="top:305.90px;font-size:4.8px;line-height:4.8px;color:#8b8b8b;left:166.0px;">out</div>
<svg class="a" style="left:175.0px;top:305.4px;" width="4.4" height="4" viewBox="0 0 4.4 4"><circle cx="2.2" cy="2" r="1.5" fill="#e0a800"/></svg>
<div class="a" style="left:53.5px;top:345.8px;width:130.3px;height:71.6px;border-radius:3px;background:#2a2a2a;box-shadow:0 0 0 1px #161616;overflow:hidden">
<div class="a" style="left:0;top:0;width:130.3px;height:19.7px;background:#2d2d2d;border-bottom:1px solid #1e1e1e"></div>
<div class="a" style="left:0;top:19.7px;width:130.3px;height:20.500000000000004px;background:#282828;border-bottom:1px solid #1e1e1e"></div>
<div class="a" style="left:111px;top:40.2px;width:19.30000000000001px;height:31.39999999999999px;background:#2c2c2c;border-left:1px solid #1e1e1e"></div>
</div>
<svg class="a" style="left:57.5px;top:351.8px;" width="8" height="8" viewBox="0 0 8 8"><path d="M1.5 1.2h5M0.5 3.2h7M0.5 5.2h7M1.5 7.2h5" stroke="#a0a0a0" stroke-width="1" fill="none"/></svg>
<div class="t" style="top:351.50px;font-size:10.65px;line-height:10.65px;color:#a2a2a2;left:67.8px;">DialogueNode</div>
<div class="t" style="top:371.60px;font-size:4.8px;line-height:4.8px;color:#8b8b8b;left:56.1px;">Default Line Type</div>
<div class="a" style="left:117.5px;top:369.6px;width:63.10000000000001px;height:6.2px;background:#3b3b3b;border-radius:1px;"></div>
<div class="t" style="top:371.60px;font-size:4.8px;line-height:4.8px;color:#a6a6a6;left:118.5px;">Say One Line</div>
<svg class="a" style="left:175.6px;top:371.8px;" width="3.2" height="2" viewBox="0 0 3.2 2"><path d="M0 0h3.2L1.6 2z" fill="#c4c4c4"/></svg>
<div class="t" style="top:380.20px;font-size:4.8px;line-height:4.8px;color:#8b8b8b;left:56.1px;">Number of Default Lines</div>
<div class="a" style="left:117.5px;top:377.8px;width:63.10000000000001px;height:7.4px;background:#1d1d1d;border-radius:1px;"></div>
<div class="t" style="top:380.00px;font-size:5.2px;line-height:5.2px;color:#b0b0b0;left:118.7px;">1</div>
<svg class="a" style="left:56.199999999999996px;top:391.3px;" width="4.4" height="4" viewBox="0 0 4.4 4"><circle cx="2.2" cy="2" r="1.6" fill="none" stroke="#e0a800" stroke-width="0.8"/></svg>
<div class="t" style="top:391.80px;font-size:4.8px;line-height:4.8px;color:#8b8b8b;left:63.3px;">In</div>
<svg class="a" style="left:56.199999999999996px;top:400.3px;" width="4.4" height="4" viewBox="0 0 4.4 4"><circle cx="2.2" cy="2" r="1.6" fill="none" stroke="#d27a1c" stroke-width="0.8"/></svg>
<svg class="a" style="left:63.3px;top:399.7px;" width="5" height="5.2" viewBox="0 0 5 5.2"><path d="M1.2 5.2 Q1.2 2.2 2.2 0.6M3.8 5.2Q3.8 2.2 4.8 0.6" stroke="#d27a1c" stroke-width="1.2" fill="none"/></svg>
<div class="t" style="top:400.80px;font-size:4.8px;line-height:4.8px;color:#8b8b8b;left:70.3px;">Default Dialogue Line</div>
<div class="a" style="left:133.5px;top:398.9px;width:29px;height:7px;background:#1d1d1d;border-radius:1px;"></div>
<div class="t" style="top:400.80px;font-size:4.8px;line-height:4.8px;color:#aaaaaa;left:134.7px;width:26.5px;overflow:hidden;">Psst boy... W</div>
<svg class="a" style="left:56.199999999999996px;top:409.3px;" width="4.4" height="4" viewBox="0 0 4.4 4"><circle cx="2.2" cy="2" r="1.6" fill="none" stroke="#8a86e6" stroke-width="0.8"/></svg>
<svg class="a" style="left:63.3px;top:408.3px;" width="6" height="6" viewBox="0 0 6 6"><rect x="0" y="0" width="6" height="2.2" fill="#8a86e6"/><rect x="0" y="3.8" width="6" height="2.2" fill="#8a86e6"/><rect x="3" y="0.5" width="2.5" height="1.2" fill="#2a2a2a"/><rect x="0.5" y="4.3" width="2.5" height="1.2" fill="#2a2a2a"/></svg>
<div class="t" style="top:409.80px;font-size:4.8px;line-height:4.8px;color:#8b8b8b;left:70.3px;">Loop Through Default Lines?</div>
<div class="a" style="left:133.5px;top:408.3px;width:5.5px;height:5.5px;background:#1d1d1d;border-radius:1px;"></div>
<div class="t" style="top:391.80px;font-size:4.8px;line-height:4.8px;color:#8b8b8b;left:167.3px;">out</div>
<svg class="a" style="left:176.8px;top:391.3px;" width="4.4" height="4" viewBox="0 0 4.4 4"><circle cx="2.2" cy="2" r="1.6" fill="none" stroke="#e0a800" stroke-width="0.8"/></svg>
<div class="a" style="left:199.2px;top:251.5px;width:162.6px;height:98px;border-radius:3px;background:#2a2a2a;box-shadow:0 0 0 1px #161616;overflow:hidden">
<div class="a" style="left:0;top:0;width:162.6px;height:19.8px;background:#2d2d2d;border-bottom:1px solid #1e1e1e"></div>
<div class="a" style="left:0;top:19.8px;width:162.6px;height:20.7px;background:#282828;border-bottom:1px solid #1e1e1e"></div>
<div class="a" style="left:144.3px;top:40.5px;width:18.299999999999983px;height:57.5px;background:#2c2c2c;border-left:1px solid #1e1e1e"></div>
</div>
<svg class="a" style="left:203.2px;top:257.5px;" width="8" height="8" viewBox="0 0 8 8"><path d="M1.5 1.2h5M0.5 3.2h7M0.5 5.2h7M1.5 7.2h5" stroke="#a0a0a0" stroke-width="1" fill="none"/></svg>
<div class="t" style="top:257.27px;font-size:10.56px;line-height:10.56px;color:#a2a2a2;left:213.5px;">WaitOnPickup</div>
<div class="t" style="top:277.00px;font-size:4.8px;line-height:4.8px;color:#8b8b8b;left:201.8px;">Default Line Type</div>
<div class="a" style="left:263.2px;top:275.0px;width:95.39999999999999px;height:6.2px;background:#3b3b3b;border-radius:1px;"></div>
<div class="t" style="top:277.00px;font-size:4.8px;line-height:4.8px;color:#a6a6a6;left:264.2px;">Say Multiple Lines</div>
<svg class="a" style="left:353.6px;top:277.2px;" width="3.2" height="2" viewBox="0 0 3.2 2"><path d="M0 0h3.2L1.6 2z" fill="#c4c4c4"/></svg>
<div class="t" style="top:284.80px;font-size:4.8px;line-height:4.8px;color:#8b8b8b;left:201.8px;">Number of Default Lines</div>
<div class="a" style="left:263.2px;top:282.4px;width:95.39999999999999px;height:7.4px;background:#1d1d1d;border-radius:1px;"></div>
<div class="t" style="top:284.60px;font-size:5.2px;line-height:5.2px;color:#b0b0b0;left:264.4px;">3</div>
<svg class="a" style="left:201.9px;top:296.7px;" width="4.4" height="4" viewBox="0 0 4.4 4"><circle cx="2.2" cy="2" r="1.6" fill="none" stroke="#9a9a9a" stroke-width="0.8"/></svg>
<svg class="a" style="left:209.0px;top:295.7px;" width="6" height="6" viewBox="0 0 6 6"><rect x="0" y="0" width="6" height="6" fill="#d8d8d8"/><path d="M1.5 1v4M4.5 1v4" stroke="#2a2a2a" stroke-width="0.9"/></svg>
<div class="t" style="top:297.20px;font-size:4.8px;line-height:4.8px;color:#8b8b8b;left:216.0px;">Required Pickup</div>
<div class="a" style="left:279.0px;top:295.3px;width:62.500000000000014px;height:7px;background:#1d1d1d;border-radius:1px;"></div>
<svg class="a" style="left:280.2px;top:296.5px;" width="4" height="4" viewBox="0 0 4 4"><path d="M0.5 0.5 3.5 3.5" stroke="#4aa3e0" stroke-width="1"/><circle cx="3" cy="3" r="1" fill="#e05a2a"/></svg>
<div class="t" style="top:297.20px;font-size:4.8px;line-height:4.8px;color:#aaaaaa;left:284.5px;width:53.500000000000014px;overflow:hidden;">Axe (Pickup Item Data)</div>
<svg class="a" style="left:201.9px;top:305.4px;" width="4.4" height="4" viewBox="0 0 4.4 4"><circle cx="2.2" cy="2" r="1.5" fill="#e0a800"/></svg>
<div class="t" style="top:305.90px;font-size:4.8px;line-height:4.8px;color:#8b8b8b;left:209.0px;">In</div>
<svg class="a" style="left:201.9px;top:314.6px;" width="4.4" height="4" viewBox="0 0 4.4 4"><circle cx="2.2" cy="2" r="1.6" fill="none" stroke="#d27a1c" stroke-width="0.8"/></svg>
<svg class="a" style="left:209.0px;top:314.0px;" width="5" height="5.2" viewBox="0 0 5 5.2"><path d="M1.2 5.2 Q1.2 2.2 2.2 0.6M3.8 5.2Q3.8 2.2 4.8 0.6" stroke="#d27a1c" stroke-width="1.2" fill="none"/></svg>
<div class="t" style="top:315.10px;font-size:4.8px;line-height:4.8px;color:#8b8b8b;left:216.0px;">Default Dialogue Line 1</div>
<div class="a" style="left:279.0px;top:313.2px;width:62.500000000000014px;height:7px;background:#1d1d1d;border-radius:1px;"></div>
<div class="t" style="top:315.10px;font-size:4.8px;line-height:4.8px;color:#aaaaaa;left:280.2px;width:60.000000000000014px;overflow:hidden;">I said pick it up!</div>
<svg class="a" style="left:201.9px;top:323.5px;" width="4.4" height="4" viewBox="0 0 4.4 4"><circle cx="2.2" cy="2" r="1.6" fill="none" stroke="#d27a1c" stroke-width="0.8"/></svg>
<svg class="a" style="left:209.0px;top:322.9px;" width="5" height="5.2" viewBox="0 0 5 5.2"><path d="M1.2 5.2 Q1.2 2.2 2.2 0.6M3.8 5.2Q3.8 2.2 4.8 0.6" stroke="#d27a1c" stroke-width="1.2" fill="none"/></svg>
<div class="t" style="top:324.00px;font-size:4.8px;line-height:4.8px;color:#8b8b8b;left:216.0px;">Default Dialogue Line 2</div>
<div class="a" style="left:279.0px;top:322.1px;width:62.500000000000014px;height:7px;background:#1d1d1d;border-radius:1px;"></div>
<div class="t" style="top:324.00px;font-size:4.8px;line-height:4.8px;color:#aaaaaa;left:280.2px;width:60.000000000000014px;overflow:hidden;">Cmon, don't be like this!</div>
<svg class="a" style="left:201.9px;top:332.5px;" width="4.4" height="4" viewBox="0 0 4.4 4"><circle cx="2.2" cy="2" r="1.6" fill="none" stroke="#d27a1c" stroke-width="0.8"/></svg>
<svg class="a" style="left:209.0px;top:331.9px;" width="5" height="5.2" viewBox="0 0 5 5.2"><path d="M1.2 5.2 Q1.2 2.2 2.2 0.6M3.8 5.2Q3.8 2.2 4.8 0.6" stroke="#d27a1c" stroke-width="1.2" fill="none"/></svg>
<div class="t" style="top:333.00px;font-size:4.8px;line-height:4.8px;color:#8b8b8b;left:216.0px;">Default Dialogue Line 3</div>
<div class="a" style="left:279.0px;top:331.1px;width:62.500000000000014px;height:7px;background:#1d1d1d;border-radius:1px;"></div>
<div class="t" style="top:333.00px;font-size:4.8px;line-height:4.8px;color:#aaaaaa;left:280.2px;width:60.000000000000014px;overflow:hidden;">The ass is waiting there for you!</div>
<svg class="a" style="left:201.9px;top:342.0px;" width="4.4" height="4" viewBox="0 0 4.4 4"><circle cx="2.2" cy="2" r="1.6" fill="none" stroke="#8a86e6" stroke-width="0.8"/></svg>
<svg class="a" style="left:209.0px;top:341.0px;" width="6" height="6" viewBox="0 0 6 6"><rect x="0" y="0" width="6" height="2.2" fill="#8a86e6"/><rect x="0" y="3.8" width="6" height="2.2" fill="#8a86e6"/><rect x="3" y="0.5" width="2.5" height="1.2" fill="#2a2a2a"/><rect x="0.5" y="4.3" width="2.5" height="1.2" fill="#2a2a2a"/></svg>
<div class="t" style="top:342.50px;font-size:4.8px;line-height:4.8px;color:#8b8b8b;left:216.0px;">Loop Through Default Lines?</div>
<div class="a" style="left:279.0px;top:341.0px;width:5.5px;height:5.5px;background:#1d1d1d;border-radius:1px;"></div>
<div class="t" style="top:297.20px;font-size:4.8px;line-height:4.8px;color:#8b8b8b;left:346.3px;">out</div>
<svg class="a" style="left:354.8px;top:296.7px;" width="4.4" height="4" viewBox="0 0 4.4 4"><circle cx="2.2" cy="2" r="1.5" fill="#e0a800"/></svg>
<div class="a" style="left:376.3px;top:250.4px;width:129.6px;height:80.2px;border-radius:3px;background:#2a2a2a;box-shadow:0 0 0 1px #161616;overflow:hidden">
<div class="a" style="left:0;top:0;width:129.6px;height:20.1px;background:#2d2d2d;border-bottom:1px solid #1e1e1e"></div>
<div class="a" style="left:0;top:20.1px;width:129.6px;height:20.799999999999997px;background:#282828;border-bottom:1px solid #1e1e1e"></div>
<div class="a" style="left:111.3px;top:40.9px;width:18.299999999999997px;height:39.300000000000004px;background:#2c2c2c;border-left:1px solid #1e1e1e"></div>
</div>
<svg class="a" style="left:380.3px;top:256.4px;" width="8" height="8" viewBox="0 0 8 8"><path d="M1.5 1.2h5M0.5 3.2h7M0.5 5.2h7M1.5 7.2h5" stroke="#a0a0a0" stroke-width="1" fill="none"/></svg>
<div class="t" style="top:256.10px;font-size:10.65px;line-height:10.65px;color:#a2a2a2;left:390.6px;">DialogueNode</div>
<div class="t" style="top:276.20px;font-size:4.8px;line-height:4.8px;color:#8b8b8b;left:378.9px;">Default Line Type</div>
<div class="a" style="left:440.3px;top:274.2px;width:62.39999999999999px;height:6.2px;background:#3b3b3b;border-radius:1px;"></div>
<div class="t" style="top:276.20px;font-size:4.8px;line-height:4.8px;color:#a6a6a6;left:441.3px;">Say Multiple Lines</div>
<svg class="a" style="left:497.7px;top:276.4px;" width="3.2" height="2" viewBox="0 0 3.2 2"><path d="M0 0h3.2L1.6 2z" fill="#c4c4c4"/></svg>
<div class="t" style="top:284.20px;font-size:4.8px;line-height:4.8px;color:#8b8b8b;left:378.9px;">Number of Default Lines</div>
<div class="a" style="left:440.3px;top:281.8px;width:62.39999999999999px;height:7.4px;background:#1d1d1d;border-radius:1px;"></div>
<div class="t" style="top:284.00px;font-size:5.2px;line-height:5.2px;color:#b0b0b0;left:441.5px;">2</div>
<svg class="a" style="left:379.0px;top:295.3px;" width="4.4" height="4" viewBox="0 0 4.4 4"><circle cx="2.2" cy="2" r="1.5" fill="#e0a800"/></svg>
<div class="t" style="top:295.80px;font-size:4.8px;line-height:4.8px;color:#8b8b8b;left:386.1px;">In</div>
<svg class="a" style="left:379.0px;top:304.3px;" width="4.4" height="4" viewBox="0 0 4.4 4"><circle cx="2.2" cy="2" r="1.6" fill="none" stroke="#d27a1c" stroke-width="0.8"/></svg>
<svg class="a" style="left:386.1px;top:303.7px;" width="5" height="5.2" viewBox="0 0 5 5.2"><path d="M1.2 5.2 Q1.2 2.2 2.2 0.6M3.8 5.2Q3.8 2.2 4.8 0.6" stroke="#d27a1c" stroke-width="1.2" fill="none"/></svg>
<div class="t" style="top:304.80px;font-size:4.8px;line-height:4.8px;color:#8b8b8b;left:393.1px;">Default Dialogue Line 1</div>
<div class="a" style="left:456.1px;top:302.9px;width:29.5px;height:7px;background:#1d1d1d;border-radius:1px;"></div>
<div class="t" style="top:304.80px;font-size:4.8px;line-height:4.8px;color:#aaaaaa;left:457.3px;width:27.0px;overflow:hidden;">Ohhhh yea b,</div>
<svg class="a" style="left:379.0px;top:313.4px;" width="4.4" height="4" viewBox="0 0 4.4 4"><circle cx="2.2" cy="2" r="1.6" fill="none" stroke="#d27a1c" stroke-width="0.8"/></svg>
<svg class="a" style="left:386.1px;top:312.79999999999995px;" width="5" height="5.2" viewBox="0 0 5 5.2"><path d="M1.2 5.2 Q1.2 2.2 2.2 0.6M3.8 5.2Q3.8 2.2 4.8 0.6" stroke="#d27a1c" stroke-width="1.2" fill="none"/></svg>
<div class="t" style="top:313.90px;font-size:4.8px;line-height:4.8px;color:#8b8b8b;left:393.1px;">Default Dialogue Line 2</div>
<div class="a" style="left:456.1px;top:312.0px;width:29.5px;height:7px;background:#1d1d1d;border-radius:1px;"></div>
<div class="t" style="top:313.90px;font-size:4.8px;line-height:4.8px;color:#aaaaaa;left:457.3px;width:27.0px;overflow:hidden;">Now, go on, </div>
<svg class="a" style="left:379.0px;top:322.2px;" width="4.4" height="4" viewBox="0 0 4.4 4"><circle cx="2.2" cy="2" r="1.6" fill="none" stroke="#8a86e6" stroke-width="0.8"/></svg>
<svg class="a" style="left:386.1px;top:321.2px;" width="6" height="6" viewBox="0 0 6 6"><rect x="0" y="0" width="6" height="2.2" fill="#8a86e6"/><rect x="0" y="3.8" width="6" height="2.2" fill="#8a86e6"/><rect x="3" y="0.5" width="2.5" height="1.2" fill="#2a2a2a"/><rect x="0.5" y="4.3" width="2.5" height="1.2" fill="#2a2a2a"/></svg>
<div class="t" style="top:322.70px;font-size:4.8px;line-height:4.8px;color:#8b8b8b;left:393.1px;">Loop Through Default Lines?</div>
<div class="a" style="left:456.1px;top:321.2px;width:5.5px;height:5.5px;background:#1d1d1d;border-radius:1px;"></div>
<div class="t" style="top:295.80px;font-size:4.8px;line-height:4.8px;color:#8b8b8b;left:490.4px;">out</div>
<svg class="a" style="left:498.90000000000003px;top:295.3px;" width="4.4" height="4" viewBox="0 0 4.4 4"><circle cx="2.2" cy="2" r="1.5" fill="#e0a800"/></svg>
<div class="a" style="left:522.1px;top:240.1px;width:165.6px;height:80.5px;border-radius:3px;background:#2a2a2a;box-shadow:0 0 0 1px #161616;overflow:hidden">
<div class="a" style="left:0;top:0;width:165.6px;height:20px;background:#2d2d2d;border-bottom:1px solid #1e1e1e"></div>
<div class="a" style="left:0;top:20px;width:165.6px;height:21.1px;background:#282828;border-bottom:1px solid #1e1e1e"></div>
<div class="a" style="left:147.1px;top:41.1px;width:18.5px;height:39.4px;background:#2c2c2c;border-left:1px solid #1e1e1e"></div>
</div>
<svg class="a" style="left:526.1px;top:246.1px;" width="8" height="8" viewBox="0 0 8 8"><path d="M1.5 1.2h5M0.5 3.2h7M0.5 5.2h7M1.5 7.2h5" stroke="#a0a0a0" stroke-width="1" fill="none"/></svg>
<div class="t" style="top:245.88px;font-size:10.55px;line-height:10.55px;color:#a2a2a2;left:536.4px;">WaitOnCombination</div>
<div class="t" style="top:266.20px;font-size:4.8px;line-height:4.8px;color:#8b8b8b;left:524.7px;">Default Line Type</div>
<div class="a" style="left:586.1px;top:264.2px;width:98.39999999999999px;height:6.2px;background:#3b3b3b;border-radius:1px;"></div>
<div class="t" style="top:266.20px;font-size:4.8px;line-height:4.8px;color:#a6a6a6;left:587.1px;">Say One Line</div>
<svg class="a" style="left:679.5px;top:266.4px;" width="3.2" height="2" viewBox="0 0 3.2 2"><path d="M0 0h3.2L1.6 2z" fill="#c4c4c4"/></svg>
<div class="t" style="top:274.40px;font-size:4.8px;line-height:4.8px;color:#8b8b8b;left:524.7px;">Number of Default Lines</div>
<div class="a" style="left:586.1px;top:272.0px;width:98.39999999999999px;height:7.4px;background:#1d1d1d;border-radius:1px;"></div>
<div class="t" style="top:274.20px;font-size:5.2px;line-height:5.2px;color:#b0b0b0;left:587.3px;">1</div>
<svg class="a" style="left:524.8px;top:285.8px;" width="4.4" height="4" viewBox="0 0 4.4 4"><circle cx="2.2" cy="2" r="1.6" fill="none" stroke="#9a9a9a" stroke-width="0.8"/></svg>
<svg class="a" style="left:531.9px;top:284.8px;" width="6" height="6" viewBox="0 0 6 6"><rect x="0" y="0" width="6" height="6" fill="#d8d8d8"/><path d="M1.5 1v4M4.5 1v4" stroke="#2a2a2a" stroke-width="0.9"/></svg>
<div class="t" style="top:286.30px;font-size:4.8px;line-height:4.8px;color:#8b8b8b;left:538.9px;">Required Result Item</div>
<div class="a" style="left:601.2px;top:284.4px;width:66.0px;height:7px;background:#1d1d1d;border-radius:1px;"></div>
<svg class="a" style="left:602.4px;top:285.6px;" width="4" height="4" viewBox="0 0 4 4"><path d="M0.5 0.5 3.5 3.5" stroke="#4aa3e0" stroke-width="1"/><circle cx="3" cy="3" r="1" fill="#e05a2a"/></svg>
<div class="t" style="top:286.30px;font-size:4.8px;line-height:4.8px;color:#aaaaaa;left:606.7px;width:57.0px;overflow:hidden;">Meat (Pickup Item Data)</div>
<svg class="a" style="left:524.8px;top:294.7px;" width="4.4" height="4" viewBox="0 0 4.4 4"><circle cx="2.2" cy="2" r="1.5" fill="#e0a800"/></svg>
<div class="t" style="top:295.20px;font-size:4.8px;line-height:4.8px;color:#8b8b8b;left:531.9px;">In</div>
<svg class="a" style="left:524.8px;top:304.0px;" width="4.4" height="4" viewBox="0 0 4.4 4"><circle cx="2.2" cy="2" r="1.6" fill="none" stroke="#d27a1c" stroke-width="0.8"/></svg>
<svg class="a" style="left:531.9px;top:303.4px;" width="5" height="5.2" viewBox="0 0 5 5.2"><path d="M1.2 5.2 Q1.2 2.2 2.2 0.6M3.8 5.2Q3.8 2.2 4.8 0.6" stroke="#d27a1c" stroke-width="1.2" fill="none"/></svg>
<div class="t" style="top:304.50px;font-size:4.8px;line-height:4.8px;color:#8b8b8b;left:538.9px;">Default Dialogue Line</div>
<div class="a" style="left:601.2px;top:302.6px;width:66.0px;height:7px;background:#1d1d1d;border-radius:1px;"></div>
<div class="t" style="top:304.50px;font-size:4.8px;line-height:4.8px;color:#aaaaaa;left:602.4px;width:63.5px;overflow:hidden;">I need my meat :(</div>
<svg class="a" style="left:524.8px;top:312.7px;" width="4.4" height="4" viewBox="0 0 4.4 4"><circle cx="2.2" cy="2" r="1.6" fill="none" stroke="#8a86e6" stroke-width="0.8"/></svg>
<svg class="a" style="left:531.9px;top:311.7px;" width="6" height="6" viewBox="0 0 6 6"><rect x="0" y="0" width="6" height="2.2" fill="#8a86e6"/><rect x="0" y="3.8" width="6" height="2.2" fill="#8a86e6"/><rect x="3" y="0.5" width="2.5" height="1.2" fill="#2a2a2a"/><rect x="0.5" y="4.3" width="2.5" height="1.2" fill="#2a2a2a"/></svg>
<div class="t" style="top:313.20px;font-size:4.8px;line-height:4.8px;color:#8b8b8b;left:538.9px;">Loop Through Default Lines?</div>
<div class="a" style="left:601.2px;top:311.7px;width:5.5px;height:5.5px;background:#1d1d1d;border-radius:1px;"></div>
<svg class="a" style="left:601.8px;top:312.3px;" width="4.5" height="4.5" viewBox="0 0 4.5 4.5"><path d="M0.6 2.4 1.8 3.7 4 0.6" stroke="#d0d0d0" stroke-width="0.9" fill="none"/></svg>
<div class="t" style="top:286.30px;font-size:4.8px;line-height:4.8px;color:#8b8b8b;left:672.0px;">out</div>
<svg class="a" style="left:680.6999999999999px;top:285.8px;" width="4.4" height="4" viewBox="0 0 4.4 4"><circle cx="2.2" cy="2" r="1.5" fill="#e0a800"/></svg>
<div class="a" style="left:708.2px;top:239.9px;width:129.7px;height:71.6px;border-radius:3px;background:#2a2a2a;box-shadow:0 0 0 1px #161616;overflow:hidden">
<div class="a" style="left:0;top:0;width:129.7px;height:20.5px;background:#2d2d2d;border-bottom:1px solid #1e1e1e"></div>
<div class="a" style="left:0;top:20.5px;width:129.7px;height:20.5px;background:#282828;border-bottom:1px solid #1e1e1e"></div>
<div class="a" style="left:111.3px;top:41px;width:18.39999999999999px;height:30.599999999999994px;background:#2c2c2c;border-left:1px solid #1e1e1e"></div>
</div>
<svg class="a" style="left:712.2px;top:245.9px;" width="8" height="8" viewBox="0 0 8 8"><path d="M1.5 1.2h5M0.5 3.2h7M0.5 5.2h7M1.5 7.2h5" stroke="#a0a0a0" stroke-width="1" fill="none"/></svg>
<div class="t" style="top:245.60px;font-size:10.65px;line-height:10.65px;color:#a2a2a2;left:722.5px;">DialogueNode</div>
<div class="t" style="top:266.10px;font-size:4.8px;line-height:4.8px;color:#8b8b8b;left:710.8px;">Default Line Type</div>
<div class="a" style="left:772.2px;top:264.1px;width:62.499999999999986px;height:6.2px;background:#3b3b3b;border-radius:1px;"></div>
<div class="t" style="top:266.10px;font-size:4.8px;line-height:4.8px;color:#a6a6a6;left:773.2px;">Say One Line</div>
<svg class="a" style="left:829.7px;top:266.3px;" width="3.2" height="2" viewBox="0 0 3.2 2"><path d="M0 0h3.2L1.6 2z" fill="#c4c4c4"/></svg>
<div class="t" style="top:274.30px;font-size:4.8px;line-height:4.8px;color:#8b8b8b;left:710.8px;">Number of Default Lines</div>
<div class="a" style="left:772.2px;top:271.9px;width:62.499999999999986px;height:7.4px;background:#1d1d1d;border-radius:1px;"></div>
<div class="t" style="top:274.10px;font-size:5.2px;line-height:5.2px;color:#b0b0b0;left:773.4px;">1</div>
<svg class="a" style="left:710.9px;top:285.4px;" width="4.4" height="4" viewBox="0 0 4.4 4"><circle cx="2.2" cy="2" r="1.5" fill="#e0a800"/></svg>
<div class="t" style="top:285.90px;font-size:4.8px;line-height:4.8px;color:#8b8b8b;left:718.0px;">In</div>
<svg class="a" style="left:710.9px;top:294.4px;" width="4.4" height="4" viewBox="0 0 4.4 4"><circle cx="2.2" cy="2" r="1.6" fill="none" stroke="#d27a1c" stroke-width="0.8"/></svg>
<svg class="a" style="left:718.0px;top:293.79999999999995px;" width="5" height="5.2" viewBox="0 0 5 5.2"><path d="M1.2 5.2 Q1.2 2.2 2.2 0.6M3.8 5.2Q3.8 2.2 4.8 0.6" stroke="#d27a1c" stroke-width="1.2" fill="none"/></svg>
<div class="t" style="top:294.90px;font-size:4.8px;line-height:4.8px;color:#8b8b8b;left:725.0px;">Default Dialogue Line</div>
<div class="a" style="left:788.2px;top:293.0px;width:29.299999999999997px;height:7px;background:#1d1d1d;border-radius:1px;"></div>
<div class="t" style="top:294.90px;font-size:4.8px;line-height:4.8px;color:#aaaaaa;left:789.4px;width:26.799999999999997px;overflow:hidden;">Now, that's it</div>
<svg class="a" style="left:710.9px;top:303.2px;" width="4.4" height="4" viewBox="0 0 4.4 4"><circle cx="2.2" cy="2" r="1.6" fill="none" stroke="#8a86e6" stroke-width="0.8"/></svg>
<svg class="a" style="left:718.0px;top:302.2px;" width="6" height="6" viewBox="0 0 6 6"><rect x="0" y="0" width="6" height="2.2" fill="#8a86e6"/><rect x="0" y="3.8" width="6" height="2.2" fill="#8a86e6"/><rect x="3" y="0.5" width="2.5" height="1.2" fill="#2a2a2a"/><rect x="0.5" y="4.3" width="2.5" height="1.2" fill="#2a2a2a"/></svg>
<div class="t" style="top:303.70px;font-size:4.8px;line-height:4.8px;color:#8b8b8b;left:725.0px;">Loop Through Default Lines?</div>
<div class="a" style="left:788.2px;top:302.2px;width:5.5px;height:5.5px;background:#1d1d1d;border-radius:1px;"></div>
<div class="t" style="top:285.90px;font-size:4.8px;line-height:4.8px;color:#8b8b8b;left:822.3px;">out</div>
<svg class="a" style="left:830.9px;top:285.4px;" width="4.4" height="4" viewBox="0 0 4.4 4"><circle cx="2.2" cy="2" r="1.5" fill="#e0a800"/></svg>
<div class="a" style="left:855.3px;top:199.5px;width:190px;height:174.9px;border-radius:3px;background:#2a2a2a;box-shadow:0 0 0 1px #161616;overflow:hidden">
<div class="a" style="left:0;top:0;width:190px;height:19.5px;background:#2d2d2d;border-bottom:1px solid #1e1e1e"></div>
<div class="a" style="left:0;top:19.5px;width:190px;height:52.2px;background:#282828;border-bottom:1px solid #1e1e1e"></div>
<div class="a" style="left:168.6px;top:71.7px;width:21.400000000000006px;height:103.2px;background:#2c2c2c;border-left:1px solid #1e1e1e"></div>
</div>
<svg class="a" style="left:859.3px;top:205.5px;" width="8" height="8" viewBox="0 0 8 8"><path d="M1.5 1.2h5M0.5 3.2h7M0.5 5.2h7M1.5 7.2h5" stroke="#a0a0a0" stroke-width="1" fill="none"/></svg>
<div class="t" style="top:205.58px;font-size:10.16px;line-height:10.16px;color:#a2a2a2;left:869.6px;">WaitOnSlot</div>
<div class="t" style="top:224.90px;font-size:4.8px;line-height:4.8px;color:#8b8b8b;left:857.9px;">Default Line Type</div>
<div class="a" style="left:937.7px;top:222.9px;width:104.39999999999999px;height:6.2px;background:#3b3b3b;border-radius:1px;"></div>
<div class="t" style="top:224.90px;font-size:4.8px;line-height:4.8px;color:#a6a6a6;left:938.7px;">Say Multiple Lines</div>
<svg class="a" style="left:1037.1px;top:225.1px;" width="3.2" height="2" viewBox="0 0 3.2 2"><path d="M0 0h3.2L1.6 2z" fill="#c4c4c4"/></svg>
<div class="t" style="top:232.85px;font-size:4.8px;line-height:4.8px;color:#8b8b8b;left:857.9px;">Number of Default Lines</div>
<div class="a" style="left:937.7px;top:230.45px;width:104.39999999999999px;height:7.4px;background:#1d1d1d;border-radius:1px;"></div>
<div class="t" style="top:232.65px;font-size:5.2px;line-height:5.2px;color:#b0b0b0;left:938.9px;">2</div>
<div class="t" style="top:240.80px;font-size:4.8px;line-height:4.8px;color:#8b8b8b;left:857.9px;">Incorrect Item Line Type</div>
<div class="a" style="left:937.7px;top:238.8px;width:104.39999999999999px;height:6.2px;background:#3b3b3b;border-radius:1px;"></div>
<div class="t" style="top:240.80px;font-size:4.8px;line-height:4.8px;color:#a6a6a6;left:938.7px;">Say Multiple Lines</div>
<svg class="a" style="left:1037.1px;top:241.0px;" width="3.2" height="2" viewBox="0 0 3.2 2"><path d="M0 0h3.2L1.6 2z" fill="#c4c4c4"/></svg>
<div class="t" style="top:248.75px;font-size:4.8px;line-height:4.8px;color:#8b8b8b;left:857.9px;">Number of Incorrect Item Lines</div>
<div class="a" style="left:937.7px;top:246.35px;width:104.39999999999999px;height:7.4px;background:#1d1d1d;border-radius:1px;"></div>
<div class="t" style="top:248.55px;font-size:5.2px;line-height:5.2px;color:#b0b0b0;left:938.9px;">2</div>
<div class="t" style="top:256.70px;font-size:4.8px;line-height:4.8px;color:#8b8b8b;left:857.9px;">Forbidden Item Line Type</div>
<div class="a" style="left:937.7px;top:254.7px;width:104.39999999999999px;height:6.2px;background:#3b3b3b;border-radius:1px;"></div>
<div class="t" style="top:256.70px;font-size:4.8px;line-height:4.8px;color:#a6a6a6;left:938.7px;">Say Multiple Lines</div>
<svg class="a" style="left:1037.1px;top:256.9px;" width="3.2" height="2" viewBox="0 0 3.2 2"><path d="M0 0h3.2L1.6 2z" fill="#c4c4c4"/></svg>
<div class="t" style="top:264.65px;font-size:4.8px;line-height:4.8px;color:#8b8b8b;left:857.9px;">Forbidden of Incorrect Item Lines</div>
<div class="a" style="left:937.7px;top:262.25px;width:104.39999999999999px;height:7.4px;background:#1d1d1d;border-radius:1px;"></div>
<div class="t" style="top:264.45px;font-size:5.2px;line-height:5.2px;color:#b0b0b0;left:938.9px;">2</div>
<svg class="a" style="left:858.0px;top:276.3px;" width="4.4" height="4" viewBox="0 0 4.4 4"><circle cx="2.2" cy="2" r="1.6" fill="none" stroke="#9a9a9a" stroke-width="0.8"/></svg>
<svg class="a" style="left:865.1px;top:275.3px;" width="6" height="6" viewBox="0 0 6 6"><rect x="0" y="0" width="6" height="6" fill="#d8d8d8"/><path d="M1.5 1v4M4.5 1v4" stroke="#2a2a2a" stroke-width="0.9"/></svg>
<div class="t" style="top:276.80px;font-size:4.8px;line-height:4.8px;color:#8b8b8b;left:872.1px;">Required Slot</div>
<div class="a" style="left:951.1px;top:274.9px;width:70.8px;height:7px;background:#1d1d1d;border-radius:1px;"></div>
<svg class="a" style="left:952.3px;top:276.1px;" width="4" height="4" viewBox="0 0 4 4"><path d="M0.5 0.5 3.5 3.5" stroke="#4aa3e0" stroke-width="1"/><circle cx="3" cy="3" r="1" fill="#e05a2a"/></svg>
<div class="t" style="top:276.80px;font-size:4.8px;line-height:4.8px;color:#aaaaaa;left:956.6px;width:61.8px;overflow:hidden;">Bonfire (Pickup Item Data)</div>
<svg class="a" style="left:858.0px;top:285.0px;" width="4.4" height="4" viewBox="0 0 4.4 4"><circle cx="2.2" cy="2" r="1.5" fill="#e0a800"/></svg>
<div class="t" style="top:285.50px;font-size:4.8px;line-height:4.8px;color:#8b8b8b;left:865.1px;">In</div>
<svg class="a" style="left:858.0px;top:294.2px;" width="4.4" height="4" viewBox="0 0 4.4 4"><circle cx="2.2" cy="2" r="1.6" fill="none" stroke="#d27a1c" stroke-width="0.8"/></svg>
<svg class="a" style="left:865.1px;top:293.59999999999997px;" width="5" height="5.2" viewBox="0 0 5 5.2"><path d="M1.2 5.2 Q1.2 2.2 2.2 0.6M3.8 5.2Q3.8 2.2 4.8 0.6" stroke="#d27a1c" stroke-width="1.2" fill="none"/></svg>
<div class="t" style="top:294.70px;font-size:4.8px;line-height:4.8px;color:#8b8b8b;left:872.1px;">Default Dialogue Line 1</div>
<div class="a" style="left:951.1px;top:292.8px;width:70.8px;height:7px;background:#1d1d1d;border-radius:1px;"></div>
<svg class="a" style="left:858.0px;top:303.2px;" width="4.4" height="4" viewBox="0 0 4.4 4"><circle cx="2.2" cy="2" r="1.6" fill="none" stroke="#d27a1c" stroke-width="0.8"/></svg>
<svg class="a" style="left:865.1px;top:302.59999999999997px;" width="5" height="5.2" viewBox="0 0 5 5.2"><path d="M1.2 5.2 Q1.2 2.2 2.2 0.6M3.8 5.2Q3.8 2.2 4.8 0.6" stroke="#d27a1c" stroke-width="1.2" fill="none"/></svg>
<div class="t" style="top:303.70px;font-size:4.8px;line-height:4.8px;color:#8b8b8b;left:872.1px;">Default Dialogue Line 2</div>
<div class="a" style="left:951.1px;top:301.8px;width:70.8px;height:7px;background:#1d1d1d;border-radius:1px;"></div>
<svg class="a" style="left:858.0px;top:312.3px;" width="4.4" height="4" viewBox="0 0 4.4 4"><circle cx="2.2" cy="2" r="1.6" fill="none" stroke="#8a86e6" stroke-width="0.8"/></svg>
<svg class="a" style="left:865.1px;top:311.3px;" width="6" height="6" viewBox="0 0 6 6"><rect x="0" y="0" width="6" height="2.2" fill="#8a86e6"/><rect x="0" y="3.8" width="6" height="2.2" fill="#8a86e6"/><rect x="3" y="0.5" width="2.5" height="1.2" fill="#2a2a2a"/><rect x="0.5" y="4.3" width="2.5" height="1.2" fill="#2a2a2a"/></svg>
<div class="t" style="top:312.80px;font-size:4.8px;line-height:4.8px;color:#8b8b8b;left:872.1px;">Loop Through Default Lines?</div>
<div class="a" style="left:951.1px;top:311.3px;width:5.5px;height:5.5px;background:#1d1d1d;border-radius:1px;"></div>
<svg class="a" style="left:951.7px;top:311.9px;" width="4.5" height="4.5" viewBox="0 0 4.5 4.5"><path d="M0.6 2.4 1.8 3.7 4 0.6" stroke="#d0d0d0" stroke-width="0.9" fill="none"/></svg>
<svg class="a" style="left:858.0px;top:321.3px;" width="4.4" height="4" viewBox="0 0 4.4 4"><circle cx="2.2" cy="2" r="1.6" fill="none" stroke="#d27a1c" stroke-width="0.8"/></svg>
<svg class="a" style="left:865.1px;top:320.7px;" width="5" height="5.2" viewBox="0 0 5 5.2"><path d="M1.2 5.2 Q1.2 2.2 2.2 0.6M3.8 5.2Q3.8 2.2 4.8 0.6" stroke="#d27a1c" stroke-width="1.2" fill="none"/></svg>
<div class="t" style="top:321.80px;font-size:4.8px;line-height:4.8px;color:#8b8b8b;left:872.1px;">Incorrect Item Dialogue Line 1</div>
<div class="a" style="left:951.1px;top:319.9px;width:70.8px;height:7px;background:#1d1d1d;border-radius:1px;"></div>
<svg class="a" style="left:858.0px;top:330.3px;" width="4.4" height="4" viewBox="0 0 4.4 4"><circle cx="2.2" cy="2" r="1.6" fill="none" stroke="#d27a1c" stroke-width="0.8"/></svg>
<svg class="a" style="left:865.1px;top:329.7px;" width="5" height="5.2" viewBox="0 0 5 5.2"><path d="M1.2 5.2 Q1.2 2.2 2.2 0.6M3.8 5.2Q3.8 2.2 4.8 0.6" stroke="#d27a1c" stroke-width="1.2" fill="none"/></svg>
<div class="t" style="top:330.80px;font-size:4.8px;line-height:4.8px;color:#8b8b8b;left:872.1px;">Incorrect Item Dialogue Line 2</div>
<div class="a" style="left:951.1px;top:328.9px;width:70.8px;height:7px;background:#1d1d1d;border-radius:1px;"></div>
<svg class="a" style="left:858.0px;top:339.3px;" width="4.4" height="4" viewBox="0 0 4.4 4"><circle cx="2.2" cy="2" r="1.6" fill="none" stroke="#8a86e6" stroke-width="0.8"/></svg>
<svg class="a" style="left:865.1px;top:338.3px;" width="6" height="6" viewBox="0 0 6 6"><rect x="0" y="0" width="6" height="2.2" fill="#8a86e6"/><rect x="0" y="3.8" width="6" height="2.2" fill="#8a86e6"/><rect x="3" y="0.5" width="2.5" height="1.2" fill="#2a2a2a"/><rect x="0.5" y="4.3" width="2.5" height="1.2" fill="#2a2a2a"/></svg>
<div class="t" style="top:339.80px;font-size:4.8px;line-height:4.8px;color:#8b8b8b;left:872.1px;">Loop Through Incorrect Item Lines?</div>
<div class="a" style="left:951.1px;top:338.3px;width:5.5px;height:5.5px;background:#1d1d1d;border-radius:1px;"></div>
<svg class="a" style="left:951.7px;top:338.9px;" width="4.5" height="4.5" viewBox="0 0 4.5 4.5"><path d="M0.6 2.4 1.8 3.7 4 0.6" stroke="#d0d0d0" stroke-width="0.9" fill="none"/></svg>
<svg class="a" style="left:858.0px;top:348.3px;" width="4.4" height="4" viewBox="0 0 4.4 4"><circle cx="2.2" cy="2" r="1.6" fill="none" stroke="#d27a1c" stroke-width="0.8"/></svg>
<svg class="a" style="left:865.1px;top:347.7px;" width="5" height="5.2" viewBox="0 0 5 5.2"><path d="M1.2 5.2 Q1.2 2.2 2.2 0.6M3.8 5.2Q3.8 2.2 4.8 0.6" stroke="#d27a1c" stroke-width="1.2" fill="none"/></svg>
<div class="t" style="top:348.80px;font-size:4.8px;line-height:4.8px;color:#8b8b8b;left:872.1px;">Forbidden Item Dialogue Line 1</div>
<div class="a" style="left:951.1px;top:346.9px;width:70.8px;height:7px;background:#1d1d1d;border-radius:1px;"></div>
<svg class="a" style="left:858.0px;top:357.3px;" width="4.4" height="4" viewBox="0 0 4.4 4"><circle cx="2.2" cy="2" r="1.6" fill="none" stroke="#d27a1c" stroke-width="0.8"/></svg>
<svg class="a" style="left:865.1px;top:356.7px;" width="5" height="5.2" viewBox="0 0 5 5.2"><path d="M1.2 5.2 Q1.2 2.2 2.2 0.6M3.8 5.2Q3.8 2.2 4.8 0.6" stroke="#d27a1c" stroke-width="1.2" fill="none"/></svg>
<div class="t" style="top:357.80px;font-size:4.8px;line-height:4.8px;color:#8b8b8b;left:872.1px;">Forbidden Item Dialogue Line 2</div>
<div class="a" style="left:951.1px;top:355.9px;width:70.8px;height:7px;background:#1d1d1d;border-radius:1px;"></div>
<svg class="a" style="left:858.0px;top:366.4px;" width="4.4" height="4" viewBox="0 0 4.4 4"><circle cx="2.2" cy="2" r="1.6" fill="none" stroke="#8a86e6" stroke-width="0.8"/></svg>
<svg class="a" style="left:865.1px;top:365.4px;" width="6" height="6" viewBox="0 0 6 6"><rect x="0" y="0" width="6" height="2.2" fill="#8a86e6"/><rect x="0" y="3.8" width="6" height="2.2" fill="#8a86e6"/><rect x="3" y="0.5" width="2.5" height="1.2" fill="#2a2a2a"/><rect x="0.5" y="4.3" width="2.5" height="1.2" fill="#2a2a2a"/></svg>
<div class="t" style="top:366.90px;font-size:4.8px;line-height:4.8px;color:#8b8b8b;left:872.1px;">Loop Through Forbidden Item Lines?</div>
<div class="a" style="left:951.1px;top:365.4px;width:5.5px;height:5.5px;background:#1d1d1d;border-radius:1px;"></div>
<div class="t" style="top:276.80px;font-size:4.8px;line-height:4.8px;color:#8b8b8b;left:1026.7px;">out</div>
<svg class="a" style="left:1038.3px;top:276.3px;" width="4.4" height="4" viewBox="0 0 4.4 4"><circle cx="2.2" cy="2" r="1.5" fill="#e0a800"/></svg>
<div class="a" style="left:-0.6px;top:506.1px;width:111.5px;height:62.9px;border-radius:3px;background:#2a2a2a;box-shadow:0 0 0 1px #161616;overflow:hidden">
<div class="a" style="left:0;top:0;width:111.5px;height:20.2px;background:#2d2d2d;border-bottom:1px solid #1e1e1e"></div>
<div class="a" style="left:0;top:20.2px;width:111.5px;height:21.3px;background:#282828;border-bottom:1px solid #1e1e1e"></div>
<div class="a" style="left:89px;top:41.5px;width:22.5px;height:21.4px;background:#2c2c2c;border-left:1px solid #1e1e1e"></div>
</div>
<svg class="a" style="left:3.4px;top:512.1px;" width="8" height="8" viewBox="0 0 8 8"><path d="M1.5 1.2h5M0.5 3.2h7M0.5 5.2h7M1.5 7.2h5" stroke="#a0a0a0" stroke-width="1" fill="none"/></svg>
<div class="t" style="top:511.86px;font-size:10.57px;line-height:10.57px;color:#a2a2a2;left:13.7px;">DialogueNode</div>
<div class="t" style="top:531.60px;font-size:4.8px;line-height:4.8px;color:#8b8b8b;left:2.0px;">Default Line Type</div>
<div class="a" style="left:62.9px;top:529.6px;width:44.8px;height:6.2px;background:#3b3b3b;border-radius:1px;"></div>
<div class="t" style="top:531.60px;font-size:4.8px;line-height:4.8px;color:#a6a6a6;left:63.9px;">Say Multiple Lines</div>
<svg class="a" style="left:102.7px;top:531.8px;" width="3.2" height="2" viewBox="0 0 3.2 2"><path d="M0 0h3.2L1.6 2z" fill="#c4c4c4"/></svg>
<div class="t" style="top:539.40px;font-size:4.8px;line-height:4.8px;color:#8b8b8b;left:2.0px;">Number of Default Lines</div>
<div class="a" style="left:62.9px;top:537.0px;width:44.8px;height:7.4px;background:#1d1d1d;border-radius:1px;"></div>
<div class="t" style="top:539.20px;font-size:5.2px;line-height:5.2px;color:#b0b0b0;left:64.1px;">-55</div>
<svg class="a" style="left:2.0999999999999996px;top:551.4px;" width="4.4" height="4" viewBox="0 0 4.4 4"><circle cx="2.2" cy="2" r="1.6" fill="none" stroke="#e0a800" stroke-width="0.8"/></svg>
<div class="t" style="top:551.90px;font-size:4.8px;line-height:4.8px;color:#8b8b8b;left:9.2px;">In</div>
<svg class="a" style="left:2.0999999999999996px;top:560.3px;" width="4.4" height="4" viewBox="0 0 4.4 4"><circle cx="2.2" cy="2" r="1.6" fill="none" stroke="#8a86e6" stroke-width="0.8"/></svg>
<svg class="a" style="left:9.2px;top:559.3px;" width="6" height="6" viewBox="0 0 6 6"><rect x="0" y="0" width="6" height="2.2" fill="#8a86e6"/><rect x="0" y="3.8" width="6" height="2.2" fill="#8a86e6"/><rect x="3" y="0.5" width="2.5" height="1.2" fill="#2a2a2a"/><rect x="0.5" y="4.3" width="2.5" height="1.2" fill="#2a2a2a"/></svg>
<div class="t" style="top:560.80px;font-size:4.8px;line-height:4.8px;color:#8b8b8b;left:16.2px;">Loop Through Default Lines?</div>
<div class="a" style="left:79.4px;top:559.3px;width:5.5px;height:5.5px;background:#1d1d1d;border-radius:1px;"></div>
<svg class="a" style="left:80.0px;top:559.9px;" width="4.5" height="4.5" viewBox="0 0 4.5 4.5"><path d="M0.6 2.4 1.8 3.7 4 0.6" stroke="#d0d0d0" stroke-width="0.9" fill="none"/></svg>
<div class="t" style="top:551.90px;font-size:4.8px;line-height:4.8px;color:#8b8b8b;left:91.2px;">out</div>
<svg class="a" style="left:103.89999999999999px;top:551.4px;" width="4.4" height="4" viewBox="0 0 4.4 4"><circle cx="2.2" cy="2" r="1.6" fill="none" stroke="#e0a800" stroke-width="0.8"/></svg>
</div></div>
<div class="a" style="left:0px;top:647px;width:1033px;height:26px;background:#101010;"></div>
<div class="a" style="left:141px;top:649px;width:82px;height:24px;background:#2e2e2e;border-radius:3px 3px 0 0;"></div>
<div class="t" style="top:656.37px;font-size:12.76px;line-height:12.76px;color:#aaaaaa;left:10px;">Scene Object Locator</div>
<svg class="a" style="left:151px;top:657px;" width="11.8" height="9.5" viewBox="0 0 11.8 9.5"><path d="M0 1a1 1 0 0 1 1-1h3.6l1.4 1.6h5.4a1 1 0 0 1 1 1V10H0z" fill="#b8b8b8" transform="scale(0.9516129032258065,0.95)"/></svg>
<div class="t" style="top:656.45px;font-size:12.66px;line-height:12.66px;color:#b0b0b0;left:167.4px;">Project</div>
<svg class="a" style="left:233.5px;top:656px;" width="10.5" height="11" viewBox="0 0 10.5 11"><rect x="0" y="0" width="10.5" height="11" rx="0.8" fill="#b4b4b4"/><path d="M1.5 2.4h6.5M1.5 4.6h7.5M1.5 6.8h6M1.5 9h7.5" stroke="#101010" stroke-width="1"/></svg>
<div class="t" style="top:655.91px;font-size:12.46px;line-height:12.46px;color:#aaaaaa;left:249px;">Console</div>
<svg class="a" style="left:321px;top:655.5px;" width="12" height="12" viewBox="0 0 12 12"><circle cx="6" cy="6" r="5.6" fill="#bdbdbd"/><path d="M6 2.5V6h3" stroke="#101010" stroke-width="1.4" fill="none"/></svg>
<div class="t" style="top:655.81px;font-size:12.59px;line-height:12.59px;color:#aaaaaa;left:337px;">Animation</div>
<svg class="a" style="left:419.6px;top:656px;" width="12.6" height="11.2" viewBox="0 0 12.6 11.2"><rect x="0" y="0" width="3" height="11.2" fill="#b4b4b4"/><rect x="9.6" y="0" width="3" height="11.2" fill="#b4b4b4"/><rect x="3" y="0" width="6.6" height="1.2" fill="#b4b4b4"/><rect x="3" y="10" width="6.6" height="1.2" fill="#b4b4b4"/><path d="M0.9 2.6h1.2M0.9 5h1.2M0.9 7.4h1.2M10.5 2.6h1.2M10.5 5h1.2M10.5 7.4h1.2" stroke="#101010" stroke-width="1.1"/></svg>
<div class="t" style="top:655.95px;font-size:12.4px;line-height:12.4px;color:#aaaaaa;left:436.6px;">Timeline</div>
<svg class="a" style="left:998px;top:656px;" width="10" height="10" viewBox="0 0 10 10"><path d="M2 4.5V3a3 3 0 0 1 6 0" stroke="#c4c4c4" stroke-width="1.3" fill="none"/><rect x="0.6" y="5" width="8.8" height="4.4" stroke="#c4c4c4" stroke-width="1.2" fill="none"/></svg>
<div class="a" style="left:1019px;top:655.5px;width:2.3px;height:2.3px;background:#c4c4c4;border-radius:1.15px;"></div>
<div class="a" style="left:1019px;top:659.7px;width:2.3px;height:2.3px;background:#c4c4c4;border-radius:1.15px;"></div>
<div class="a" style="left:1019px;top:663.9px;width:2.3px;height:2.3px;background:#c4c4c4;border-radius:1.15px;"></div>
<div class="a" style="left:1px;top:673px;width:1032px;height:21px;background:#2e2e2e;"></div>
<div class="a" style="left:1px;top:693px;width:1032px;height:1px;background:#1f1f1f;"></div>
<svg class="a" style="left:8px;top:677px;" width="12" height="12" viewBox="0 0 12 12"><path d="M6 0v12M0 6h12" stroke="#c8c8c8" stroke-width="1.8"/></svg>
<svg class="a" style="left:24.2px;top:681.5px;" width="7.4" height="4.5" viewBox="0 0 7.4 4.5"><path d="M0 0h7.4L3.7 4.5z" fill="#c4c4c4"/></svg>
<div class="a" style="left:567px;top:675px;width:318px;height:16px;background:#1f1f1f;box-shadow:inset 0 0 0 1px #191919;border-radius:3px;"></div>
<svg class="a" style="left:572px;top:679.5px;" width="8" height="8" viewBox="0 0 8 8"><g transform="scale(0.6153846153846154)"><circle cx="5" cy="5" r="4" stroke="#c4c4c4" stroke-width="1.6" fill="none"/><path d="M8 8l4.2 4.2" stroke="#c4c4c4" stroke-width="2"/></g></svg>
<svg class="a" style="left:870px;top:677px;" width="13" height="13" viewBox="0 0 13 13"><rect x="0.6" y="6" width="6.4" height="6.4" stroke="#bdbdbd" stroke-width="1.1" fill="none"/><path d="M4 1h8v8" stroke="#bdbdbd" stroke-width="1.1" fill="none"/><path d="M11.5 1.5 5.5 7.5M7.5 2h4v4" stroke="#bdbdbd" stroke-width="1.2" fill="none"/></svg>
<div class="a" style="left:887.7px;top:673px;width:1px;height:20px;background:#262626;"></div>
<div class="a" style="left:913.3px;top:673px;width:1px;height:20px;background:#262626;"></div>
<div class="a" style="left:939.3px;top:673px;width:1px;height:20px;background:#262626;"></div>
<div class="a" style="left:965.7px;top:673px;width:1px;height:20px;background:#262626;"></div>
<div class="a" style="left:991.7px;top:673px;width:1px;height:20px;background:#262626;"></div>
<svg class="a" style="left:893px;top:676px;" width="14" height="14" viewBox="0 0 14 14"><rect x="1" y="0.5" width="5.5" height="5.5" fill="#bdbdbd"/><circle cx="4" cy="10" r="3.3" fill="#bdbdbd"/><path d="M9.5 3.5 13 9.5H6z" fill="#bdbdbd"/></svg>
<svg class="a" style="left:920px;top:677px;" width="12" height="12" viewBox="0 0 12 12"><path d="M6 0.5h5.5V6L5.5 12 0 6.5z" fill="#bdbdbd"/><circle cx="9" cy="3" r="1" fill="#2e2e2e"/></svg>
<svg class="a" style="left:945px;top:676.5px;" width="13" height="13" viewBox="0 0 13 13"><circle cx="6.5" cy="6.5" r="6.3" fill="#bdbdbd"/><rect x="5.6" y="2.6" width="1.8" height="5.4" fill="#2e2e2e"/><rect x="5.6" y="9.1" width="1.8" height="1.8" fill="#2e2e2e"/></svg>
<svg class="a" style="left:971.5px;top:676.5px;" width="12" height="12" viewBox="0 0 12 12"><path d="M6 0.3 7.7 4.2 11.8 4.5 8.7 7.2 9.7 11.4 6 9.1 2.3 11.4 3.3 7.2 0.2 4.5 4.3 4.2z" fill="#8a8a8a"/></svg>
<svg class="a" style="left:997.7px;top:679px;" width="14" height="9" viewBox="0 0 14 9"><path d="M0.6 4.5Q7 -2.5 13.4 4.5Q7 11.5 0.6 4.5z" stroke="#8a8a8a" stroke-width="1.1" fill="none"/><circle cx="7" cy="4.5" r="2.2" fill="#8a8a8a"/></svg>
<div class="t" style="top:678.11px;font-size:13.49px;line-height:13.49px;color:#8b8b8b;left:1013.3px;">37</div>
<div class="a" style="left:1px;top:694px;width:207px;height:290px;background:#2b2b2b;"></div>
<div class="a" style="left:207.5px;top:694px;width:1.5px;height:290px;background:#1e1e1e;"></div>
<svg class="a" style="left:5.4px;top:697.5px;" width="8.5" height="8" viewBox="0 0 8.5 8"><path d="M0 0h8.5L4.25 8z" fill="#5e5e5e"/></svg>
<svg class="a" style="left:19.3px;top:695.5px;" width="12" height="12" viewBox="0 0 12 12"><path d="M6 0.3 7.7 4.2 11.8 4.5 8.7 7.2 9.7 11.4 6 9.1 2.3 11.4 3.3 7.2 0.2 4.5 4.3 4.2z" fill="#c4c4c4"/></svg>
<div class="t" style="top:696.99px;font-size:11.96px;line-height:11.96px;color:#b0b0b0;left:36.3px;font-weight:700;">Favorites</div>
<svg class="a" style="left:32px;top:711.7px;" width="12.5" height="12.5" viewBox="0 0 12.5 12.5"><g transform="scale(0.9615384615384616)"><circle cx="5" cy="5" r="4" stroke="#c4c4c4" stroke-width="1.6" fill="none"/><path d="M8 8l4.2 4.2" stroke="#c4c4c4" stroke-width="2"/></g></svg>
<div class="t" style="top:712.60px;font-size:12.6px;line-height:12.6px;color:#a7a7a7;left:48.8px;">All Materials</div>
<svg class="a" style="left:32px;top:727.7px;" width="12.5" height="12.5" viewBox="0 0 12.5 12.5"><g transform="scale(0.9615384615384616)"><circle cx="5" cy="5" r="4" stroke="#c4c4c4" stroke-width="1.6" fill="none"/><path d="M8 8l4.2 4.2" stroke="#c4c4c4" stroke-width="2"/></g></svg>
<div class="t" style="top:728.60px;font-size:12.6px;line-height:12.6px;color:#a7a7a7;left:48.8px;">All Models</div>
<svg class="a" style="left:32px;top:743.7px;" width="12.5" height="12.5" viewBox="0 0 12.5 12.5"><g transform="scale(0.9615384615384616)"><circle cx="5" cy="5" r="4" stroke="#c4c4c4" stroke-width="1.6" fill="none"/><path d="M8 8l4.2 4.2" stroke="#c4c4c4" stroke-width="2"/></g></svg>
<div class="t" style="top:744.60px;font-size:12.6px;line-height:12.6px;color:#a7a7a7;left:48.8px;">All Prefabs</div>
<svg class="a" style="left:6.4px;top:776.5px;" width="8.5" height="8" viewBox="0 0 8.5 8"><path d="M0 0h8.5L4.25 8z" fill="#5e5e5e"/></svg>
<svg class="a" style="left:18.6px;top:775.5px;" width="14" height="10" viewBox="0 0 14 10"><path d="M0 1a1 1 0 0 1 1-1h3.5l1.4 1.5h5a1 1 0 0 1 1 1V3H3L0 10z" fill="#c4c4c4"/><path d="M3.3 4H14l-3 6H0.3z" fill="#c4c4c4"/></svg>
<div class="t" style="top:774.65px;font-size:12.01px;line-height:12.01px;color:#b0b0b0;left:36px;font-weight:700;">Assets</div>
<div class="a" style="left:1px;top:837px;width:207px;height:16px;background:#3a3a3a;"></div>
<svg class="a" style="left:19.7px;top:792.7px;" width="8" height="9" viewBox="0 0 8 9"><path d="M0 0v9l8 -4.5z" fill="#5e5e5e"/></svg>
<svg class="a" style="left:32.8px;top:792.2px;" width="12.4" height="10" viewBox="0 0 12.4 10"><path d="M0 1a1 1 0 0 1 1-1h3.6l1.4 1.6h5.4a1 1 0 0 1 1 1V10H0z" fill="#b4b4b4" transform="scale(1.0,1.0)"/></svg>
<div class="t" style="top:791.77px;font-size:12.63px;line-height:12.63px;color:#a7a7a7;left:49.3px;">AddressableAssetsData</div>
<svg class="a" style="left:19.7px;top:808.7px;" width="8" height="9" viewBox="0 0 8 9"><path d="M0 0v9l8 -4.5z" fill="#5e5e5e"/></svg>
<svg class="a" style="left:32.8px;top:808.2px;" width="12.4" height="10" viewBox="0 0 12.4 10"><path d="M0 1a1 1 0 0 1 1-1h3.6l1.4 1.6h5.4a1 1 0 0 1 1 1V10H0z" fill="#b4b4b4" transform="scale(1.0,1.0)"/></svg>
<div class="t" style="top:807.50px;font-size:12.99px;line-height:12.99px;color:#a7a7a7;left:49.3px;">Art</div>
<svg class="a" style="left:19.7px;top:824.7px;" width="8" height="9" viewBox="0 0 8 9"><path d="M0 0v9l8 -4.5z" fill="#5e5e5e"/></svg>
<svg class="a" style="left:32.8px;top:824.2px;" width="12.4" height="10" viewBox="0 0 12.4 10"><path d="M0 1a1 1 0 0 1 1-1h3.6l1.4 1.6h5.4a1 1 0 0 1 1 1V10H0z" fill="#b4b4b4" transform="scale(1.0,1.0)"/></svg>
<div class="t" style="top:824.13px;font-size:12.17px;line-height:12.17px;color:#a7a7a7;left:49.3px;">Data</div>
<svg class="a" style="left:19.7px;top:840.7px;" width="8" height="9" viewBox="0 0 8 9"><path d="M0 0v9l8 -4.5z" fill="#5e5e5e"/></svg>
<svg class="a" style="left:32.8px;top:840.2px;" width="12.4" height="10" viewBox="0 0 12.4 10"><path d="M0 1a1 1 0 0 1 1-1h3.6l1.4 1.6h5.4a1 1 0 0 1 1 1V10H0z" fill="#b4b4b4" transform="scale(1.0,1.0)"/></svg>
<div class="t" style="top:840.04px;font-size:12.29px;line-height:12.29px;color:#a7a7a7;left:49.3px;">Dialogue</div>
<svg class="a" style="left:19.7px;top:856.7px;" width="8" height="9" viewBox="0 0 8 9"><path d="M0 0v9l8 -4.5z" fill="#5e5e5e"/></svg>
<svg class="a" style="left:32.8px;top:856.2px;" width="12.4" height="10" viewBox="0 0 12.4 10"><path d="M0 1a1 1 0 0 1 1-1h3.6l1.4 1.6h5.4a1 1 0 0 1 1 1V10H0z" fill="#b4b4b4" transform="scale(1.0,1.0)"/></svg>
<div class="t" style="top:855.77px;font-size:12.63px;line-height:12.63px;color:#a7a7a7;left:49.3px;">Editor</div>
<svg class="a" style="left:19.7px;top:872.7px;" width="8" height="9" viewBox="0 0 8 9"><path d="M0 0v9l8 -4.5z" fill="#5e5e5e"/></svg>
<svg class="a" style="left:32.8px;top:872.2px;" width="12.4" height="10" viewBox="0 0 12.4 10"><path d="M0 1a1 1 0 0 1 1-1h3.6l1.4 1.6h5.4a1 1 0 0 1 1 1V10H0z" fill="#b4b4b4" transform="scale(1.0,1.0)"/></svg>
<div class="t" style="top:871.97px;font-size:12.38px;line-height:12.38px;color:#a7a7a7;left:49.3px;">External</div>
<svg class="a" style="left:32.8px;top:888.2px;" width="12.4" height="10" viewBox="0 0 12.4 10"><path d="M0 1a1 1 0 0 1 1-1h3.6l1.4 1.6h5.4a1 1 0 0 1 1 1V10H0z" fill="#b4b4b4" transform="scale(1.0,1.0)"/></svg>
<div class="t" style="top:887.67px;font-size:12.77px;line-height:12.77px;color:#a7a7a7;left:49.3px;">Input</div>
<svg class="a" style="left:32.8px;top:904.2px;" width="12.4" height="10" viewBox="0 0 12.4 10"><path d="M0 1a1 1 0 0 1 1-1h3.6l1.4 1.6h5.4a1 1 0 0 1 1 1V10H0z" fill="#b4b4b4" transform="scale(1.0,1.0)"/></svg>
<div class="t" style="top:904.07px;font-size:12.25px;line-height:12.25px;color:#a7a7a7;left:49.3px;">Playables</div>
<svg class="a" style="left:19.7px;top:920.7px;" width="8" height="9" viewBox="0 0 8 9"><path d="M0 0v9l8 -4.5z" fill="#5e5e5e"/></svg>
<svg class="a" style="left:32.8px;top:920.2px;" width="12.4" height="10" viewBox="0 0 12.4 10"><path d="M0 1a1 1 0 0 1 1-1h3.6l1.4 1.6h5.4a1 1 0 0 1 1 1V10H0z" fill="#b4b4b4" transform="scale(1.0,1.0)"/></svg>
<div class="t" style="top:919.91px;font-size:12.45px;line-height:12.45px;color:#a7a7a7;left:49.3px;">Prefabs</div>
<svg class="a" style="left:19.7px;top:936.7px;" width="8" height="9" viewBox="0 0 8 9"><path d="M0 0v9l8 -4.5z" fill="#5e5e5e"/></svg>
<svg class="a" style="left:32.8px;top:936.2px;" width="12.4" height="10" viewBox="0 0 12.4 10"><path d="M0 1a1 1 0 0 1 1-1h3.6l1.4 1.6h5.4a1 1 0 0 1 1 1V10H0z" fill="#b4b4b4" transform="scale(1.0,1.0)"/></svg>
<div class="t" style="top:936.04px;font-size:12.28px;line-height:12.28px;color:#a7a7a7;left:49.3px;">Resources</div>
<svg class="a" style="left:19.7px;top:952.7px;" width="8" height="9" viewBox="0 0 8 9"><path d="M0 0v9l8 -4.5z" fill="#5e5e5e"/></svg>
<svg class="a" style="left:32.8px;top:952.2px;" width="12.4" height="10" viewBox="0 0 12.4 10"><path d="M0 1a1 1 0 0 1 1-1h3.6l1.4 1.6h5.4a1 1 0 0 1 1 1V10H0z" fill="#b4b4b4" transform="scale(1.0,1.0)"/></svg>
<div class="t" style="top:952.04px;font-size:12.29px;line-height:12.29px;color:#a7a7a7;left:49.3px;">Scenes</div>
<svg class="a" style="left:19.7px;top:968.7px;" width="8" height="9" viewBox="0 0 8 9"><path d="M0 0v9l8 -4.5z" fill="#5e5e5e"/></svg>
<svg class="a" style="left:32.8px;top:968.2px;" width="12.4" height="10" viewBox="0 0 12.4 10"><path d="M0 1a1 1 0 0 1 1-1h3.6l1.4 1.6h5.4a1 1 0 0 1 1 1V10H0z" fill="#b4b4b4" transform="scale(1.0,1.0)"/></svg>
<div class="t" style="top:967.67px;font-size:12.76px;line-height:12.76px;color:#a7a7a7;left:49.3px;">Scripts</div>
<div class="a" style="left:209px;top:694px;width:824px;height:290px;background:#282828;"></div>
<div class="a" style="left:209px;top:694px;width:824px;height:21px;background:#2f2f2f;"></div>
<div class="t" style="top:697.67px;font-size:12.63px;line-height:12.63px;color:#979797;left:213px;">Assets</div>
<svg class="a" style="left:257.8px;top:699.5px;" width="6" height="10" viewBox="0 0 6 10"><path d="M0.7 0.7 5 5 0.7 9.3" stroke="#8a8a8a" stroke-width="1.2" fill="none"/></svg>
<div class="t" style="top:698.14px;font-size:12.03px;line-height:12.03px;color:#b0b0b0;left:269px;font-weight:700;">Dialogue</div>
<div class="a" style="left:209px;top:747px;width:824px;height:16px;background:#3a3a3a;"></div>
<svg class="a" style="left:226.9px;top:717.8px;" width="12.4" height="10.5" viewBox="0 0 12.4 10.5"><path d="M0 1a1 1 0 0 1 1-1h3.6l1.4 1.6h5.4a1 1 0 0 1 1 1V10H0z" fill="#b4b4b4" transform="scale(1.0,1.05)"/></svg>
<div class="t" style="top:718.11px;font-size:12.32px;line-height:12.32px;color:#a7a7a7;left:243.2px;">Anne Lise</div>
<svg class="a" style="left:226.9px;top:733.8px;" width="12.4" height="10.5" viewBox="0 0 12.4 10.5"><path d="M0 1a1 1 0 0 1 1-1h3.6l1.4 1.6h5.4a1 1 0 0 1 1 1V10H0z" fill="#b4b4b4" transform="scale(1.0,1.05)"/></svg>
<div class="t" style="top:734.03px;font-size:12.43px;line-height:12.43px;color:#a7a7a7;left:243.2px;">Gardener</div>
<svg class="a" style="left:226.5px;top:748.3px;" width="13" height="13" viewBox="0 0 13 13"><g transform="scale(0.45)"><path d="M11 1.5 20.5 6.5V18.5L11 23.5 1.5 18.5V6.5z M1.5 6.5 11 11.5 20.5 6.5 M11 11.5V23.5" stroke="#5ab8e6" stroke-width="2.4" fill="none" stroke-linejoin="round"/><rect x="13.5" y="13" width="15" height="15" fill="#3a3a3a"/><path d="M19 14.5h-1.5a1.2 1.2 0 0 0-1.2 1.2v3l-1.6 1.6 1.6 1.6v3a1.2 1.2 0 0 0 1.2 1.2H19M23 14.5h1.5a1.2 1.2 0 0 1 1.2 1.2v3l1.6 1.6-1.6 1.6v3a1.2 1.2 0 0 1-1.2 1.2H23" stroke="#e8582a" stroke-width="2.4" fill="none"/></g></svg>
<div class="t" style="top:749.83px;font-size:12.69px;line-height:12.69px;color:#a7a7a7;left:243.2px;">TestAssDialogue</div>
<svg class="a" style="left:226.5px;top:764.3px;" width="13" height="13" viewBox="0 0 13 13"><g transform="scale(0.45)"><path d="M11 1.5 20.5 6.5V18.5L11 23.5 1.5 18.5V6.5z M1.5 6.5 11 11.5 20.5 6.5 M11 11.5V23.5" stroke="#5ab8e6" stroke-width="2.4" fill="none" stroke-linejoin="round"/><rect x="13.5" y="13" width="15" height="15" fill="#282828"/><path d="M19 14.5h-1.5a1.2 1.2 0 0 0-1.2 1.2v3l-1.6 1.6 1.6 1.6v3a1.2 1.2 0 0 0 1.2 1.2H19M23 14.5h1.5a1.2 1.2 0 0 1 1.2 1.2v3l1.6 1.6-1.6 1.6v3a1.2 1.2 0 0 1-1.2 1.2H23" stroke="#e8582a" stroke-width="2.4" fill="none"/></g></svg>
<div class="t" style="top:765.80px;font-size:12.73px;line-height:12.73px;color:#a7a7a7;left:243.2px;">TestDialogue</div>
<div class="a" style="left:1035px;top:0px;width:585px;height:26px;background:#101010;"></div>
<div class="a" style="left:1035px;top:2px;width:95px;height:24px;background:#2e2e2e;border-radius:3px 3px 0 0;"></div>
<svg class="a" style="left:1045.7px;top:9.5px;" width="10.5" height="10.5" viewBox="0 0 10.5 10.5"><circle cx="5.25" cy="5.25" r="5.2" fill="#c4c4c4"/><rect x="4.5" y="4.3" width="1.6" height="4" fill="#2e2e2e"/><rect x="4.5" y="2" width="1.6" height="1.5" fill="#2e2e2e"/></svg>
<div class="t" style="top:9.44px;font-size:12.93px;line-height:12.93px;color:#b0b0b0;left:1061.1px;">Inspector</div>
<div class="t" style="top:9.79px;font-size:12.48px;line-height:12.48px;color:#aaaaaa;left:1138.9px;">Scene Browser</div>
<div class="t" style="top:9.61px;font-size:12.71px;line-height:12.71px;color:#aaaaaa;left:1242px;">Sprite Collider Generator</div>
<div class="t" style="top:9.52px;font-size:12.83px;line-height:12.83px;color:#aaaaaa;left:1399.3px;">Batch Component Adder</div>
<div class="a" style="left:1556px;top:0;width:11px;height:26px;overflow:hidden">
<div class="t" style="top:9.54px;font-size:12.8px;line-height:12.8px;color:#aaaaaa;left:0px;">Po</div>
</div>
<div class="a" style="left:1567px;top:2px;width:16px;height:24px;background:#1c1c1c;"></div>
<svg class="a" style="left:1572px;top:10.2px;" width="6" height="7.5" viewBox="0 0 6 7.5"><path d="M0 0v7.5L6 3.75z" fill="#c4c4c4"/></svg>
<svg class="a" style="left:1585.5px;top:9.3px;" width="10" height="10" viewBox="0 0 10 10"><path d="M2 4.5V3a3 3 0 0 1 6 0" stroke="#c4c4c4" stroke-width="1.3" fill="none"/><rect x="0.6" y="5" width="8.8" height="4.4" stroke="#c4c4c4" stroke-width="1.2" fill="none"/></svg>
<div class="a" style="left:1606px;top:9.0px;width:2.3px;height:2.3px;background:#c4c4c4;border-radius:1.15px;"></div>
<div class="a" style="left:1606px;top:13.2px;width:2.3px;height:2.3px;background:#c4c4c4;border-radius:1.15px;"></div>
<div class="a" style="left:1606px;top:17.4px;width:2.3px;height:2.3px;background:#c4c4c4;border-radius:1.15px;"></div>
<div class="a" style="left:1035px;top:26px;width:585px;height:958px;background:#2e2e2e;"></div>
<svg class="a" style="left:1044.5px;top:34.5px;" width="29.0" height="28.0" viewBox="0 0 29.0 28.0"><g transform="scale(1.0)"><path d="M11 1.5 20.5 6.5V18.5L11 23.5 1.5 18.5V6.5z M1.5 6.5 11 11.5 20.5 6.5 M11 11.5V23.5" stroke="#5ab8e6" stroke-width="1.8" fill="none" stroke-linejoin="round"/><rect x="13.5" y="13" width="15" height="15" fill="#2e2e2e"/><path d="M19 14.5h-1.5a1.2 1.2 0 0 0-1.2 1.2v3l-1.6 1.6 1.6 1.6v3a1.2 1.2 0 0 0 1.2 1.2H19M23 14.5h1.5a1.2 1.2 0 0 1 1.2 1.2v3l1.6 1.6-1.6 1.6v3a1.2 1.2 0 0 1-1.2 1.2H23" stroke="#e8582a" stroke-width="1.8" fill="none"/></g></svg>
<div class="a" style="left:1081px;top:26px;width:502px;height:30px;overflow:hidden">
<div class="t" style="top:6.40px;font-size:13.5px;line-height:13.5px;color:#7e7e7e;left:0.2px;">Test Ass Dialogue (Runtime Dialogue Graph) Import Settings (Dialogue Graph Importer)</div>
</div>
<svg class="a" style="left:1591.6px;top:34.2px;" width="10.5" height="9.5" viewBox="0 0 10.5 9.5"><path d="M0 2.5h10.5M0 7h10.5" stroke="#c4c4c4" stroke-width="1.2"/><path d="M6.8 0v5M3.5 4.5v5" stroke="#c4c4c4" stroke-width="1.4"/></svg>
<div class="a" style="left:1612px;top:34.2px;width:2.2px;height:2.2px;background:#c4c4c4;border-radius:1.1px;"></div>
<div class="a" style="left:1612px;top:38.400000000000006px;width:2.2px;height:2.2px;background:#c4c4c4;border-radius:1.1px;"></div>
<div class="a" style="left:1612px;top:42.6px;width:2.2px;height:2.2px;background:#c4c4c4;border-radius:1.1px;"></div>
<div class="a" style="left:1573px;top:55.2px;width:43px;height:16px;background:#474747;box-shadow:inset 0 0 0 1px #2c2c2c;border-radius:3px;"></div>
<div class="t" style="top:58.16px;font-size:12.26px;line-height:12.26px;color:#b4b4b4;left:1579.5px;">Open</div>
<div class="a" style="left:1038.4px;top:77px;width:13.7px;height:13.7px;background:#252525;box-shadow:inset 0 0 0 1px #1f1f1f;border-radius:2px;"></div>
<div class="t" style="top:79.35px;font-size:12.66px;line-height:12.66px;color:#b0b0b0;left:1055.3px;">Addressable</div>
<div class="a" style="left:1035px;top:98.5px;width:585px;height:1.5px;background:#1a1a1a;"></div>
<div class="t" style="top:104.96px;font-size:13.69px;line-height:13.69px;color:#636363;left:1054.4px;">Script</div>
<div class="a" style="left:1279.2px;top:103.3px;width:337.0999999999999px;height:16.700000000000003px;background:#262626;box-shadow:inset 0 0 0 1px #222222;border-radius:3px;"></div>
<svg class="a" style="left:1284px;top:106.5px;" width="9" height="11" viewBox="0 0 9 11"><path d="M0 0h6.5L9 2.5V11H0z" fill="#7a7a7a"/><path d="M3 3.5 2.5 9M6 3.5 5.5 9M1.5 5h6M1.3 7.3h6" stroke="#3b6b3b" stroke-width="0.9"/></svg>
<div class="t" style="top:106.68px;font-size:12.49px;line-height:12.49px;color:#6e6e6e;left:1295px;">DialogueGraphImporter</div>
<div class="a" style="left:1598.4px;top:104px;width:17.5px;height:15.5px;background:#232323;border-radius:0 3px 3px 0;"></div>
<svg class="a" style="left:1602px;top:106.5px;" width="10.5" height="10.5" viewBox="0 0 10.5 10.5"><circle cx="5.25" cy="5.25" r="4.6" stroke="#8a8a8a" stroke-width="1.1" fill="none"/><circle cx="5.25" cy="5.25" r="1.4" fill="#8a8a8a"/></svg>
<div class="a" style="left:1519.8px;top:131.6px;width:48.2px;height:17.4px;background:#353535;border-radius:3px;"></div>
<div class="t" style="top:135.04px;font-size:12.29px;line-height:12.29px;color:#6e6e6e;left:1525.5px;">Revert</div>
<div class="a" style="left:1572.9px;top:131.6px;width:42.9px;height:17.4px;background:#353535;border-radius:3px;"></div>
<div class="t" style="top:134.81px;font-size:12.59px;line-height:12.59px;color:#6e6e6e;left:1578.5px;">Apply</div>
<svg class="a" style="left:1040.6px;top:164.5px;" width="9.7" height="8" viewBox="0 0 9.7 8"><path d="M0 0h9.7L4.85 8z" fill="#707070"/></svg>
<div class="t" style="top:163.23px;font-size:12.04px;line-height:12.04px;color:#9e9e9e;left:1055.1px;font-weight:700;">Asset PostProcessors</div>
<div class="a" style="left:1053.6px;top:178.5px;width:562.7px;height:74.7px;background:#333333;box-shadow:inset 0 0 0 1px #262626;border-radius:4px;"></div>
<svg class="a" style="left:1064.7px;top:186.0px;" width="8" height="9" viewBox="0 0 8 9"><path d="M0 0v9l8 -4.5z" fill="#707070"/></svg>
<div class="t" style="top:185.30px;font-size:12.47px;line-height:12.47px;color:#a2a2a2;left:1076.3px;">UnityEditor.U2D.PSD.PSDImporterAssetPostProcessor</div>
<svg class="a" style="left:1064.7px;top:209.1px;" width="8" height="9" viewBox="0 0 8 9"><path d="M0 0v9l8 -4.5z" fill="#707070"/></svg>
<div class="t" style="top:208.16px;font-size:12.78px;line-height:12.78px;color:#a2a2a2;left:1076.3px;">UnityEditor.ShaderGraph.ShaderGraphAssetPostProcessor</div>
<svg class="a" style="left:1064.7px;top:231.3px;" width="8" height="9" viewBox="0 0 8 9"><path d="M0 0v9l8 -4.5z" fill="#707070"/></svg>
<div class="t" style="top:230.50px;font-size:12.6px;line-height:12.6px;color:#a2a2a2;left:1076.3px;">UnityEditor.U2D.Animation.SpritePostProcess</div>
<div class="a" style="left:1035px;top:281.7px;width:585px;height:1.5px;background:#1a1a1a;"></div>
<div class="a" style="left:1035px;top:283.2px;width:585px;height:25.3px;background:#2e2e2e;"></div>
<div class="t" style="top:289.57px;font-size:12.89px;line-height:12.89px;color:#a2a2a2;left:1039.3px;">Imported Object</div>
<div class="a" style="left:1035px;top:308.5px;width:585px;height:1.5px;background:#1a1a1a;"></div>
<svg class="a" style="left:1044.3px;top:318px;" width="29.0" height="28.0" viewBox="0 0 29.0 28.0"><g transform="scale(1.0)"><path d="M11 1.5 20.5 6.5V18.5L11 23.5 1.5 18.5V6.5z M1.5 6.5 11 11.5 20.5 6.5 M11 11.5V23.5" stroke="#5ab8e6" stroke-width="1.8" fill="none" stroke-linejoin="round"/><rect x="13.5" y="13" width="15" height="15" fill="#2e2e2e"/><path d="M19 14.5h-1.5a1.2 1.2 0 0 0-1.2 1.2v3l-1.6 1.6 1.6 1.6v3a1.2 1.2 0 0 0 1.2 1.2H19M23 14.5h1.5a1.2 1.2 0 0 1 1.2 1.2v3l1.6 1.6-1.6 1.6v3a1.2 1.2 0 0 1-1.2 1.2H23" stroke="#e8582a" stroke-width="1.8" fill="none"/></g></svg>
<div class="t" style="top:316.45px;font-size:13.57px;line-height:13.57px;color:#7e7e7e;left:1081.2px;">Test Ass Dialogue (Runtime Dialogue Graph)</div>
<div class="a" style="left:1612px;top:318.3px;width:2.2px;height:2.2px;background:#c4c4c4;border-radius:1.1px;"></div>
<div class="a" style="left:1612px;top:322.5px;width:2.2px;height:2.2px;background:#c4c4c4;border-radius:1.1px;"></div>
<div class="a" style="left:1612px;top:326.7px;width:2.2px;height:2.2px;background:#c4c4c4;border-radius:1.1px;"></div>
<div class="a" style="left:1038px;top:359px;width:13.7px;height:13.7px;background:#252525;box-shadow:inset 0 0 0 1px #1f1f1f;border-radius:2px;"></div>
<div class="t" style="top:361.65px;font-size:12.66px;line-height:12.66px;color:#b0b0b0;left:1055.1px;">Addressable</div>
<div class="a" style="left:1035px;top:381px;width:585px;height:1.5px;background:#1a1a1a;"></div>
<div class="t" style="top:386.76px;font-size:13.69px;line-height:13.69px;color:#636363;left:1054.4px;">Script</div>
<div class="a" style="left:1279.2px;top:384.4px;width:336.79999999999995px;height:17.0px;background:#262626;box-shadow:inset 0 0 0 1px #222222;border-radius:3px;"></div>
<svg class="a" style="left:1284px;top:387.5px;" width="9" height="11" viewBox="0 0 9 11"><path d="M0 0h6.5L9 2.5V11H0z" fill="#7a7a7a"/><path d="M3 3.5 2.5 9M6 3.5 5.5 9M1.5 5h6M1.3 7.3h6" stroke="#3b6b3b" stroke-width="0.9"/></svg>
<div class="t" style="top:388.13px;font-size:12.82px;line-height:12.82px;color:#6e6e6e;left:1295px;">RuntimeDialogueGraph</div>
<div class="a" style="left:1598.4px;top:385.1px;width:17.5px;height:15.6px;background:#232323;border-radius:0 3px 3px 0;"></div>
<svg class="a" style="left:1602px;top:387.7px;" width="10.5" height="10.5" viewBox="0 0 10.5 10.5"><circle cx="5.25" cy="5.25" r="4.6" stroke="#8a8a8a" stroke-width="1.1" fill="none"/><circle cx="5.25" cy="5.25" r="1.4" fill="#8a8a8a"/></svg>
<div class="t" style="top:407.08px;font-size:13.14px;line-height:13.14px;color:#636363;left:1054.4px;">Entry Node ID</div>
<div class="a" style="left:1279.2px;top:404.2px;width:336.79999999999995px;height:17.400000000000034px;background:#262626;box-shadow:inset 0 0 0 1px #222222;border-radius:3px;"></div>
<div class="t" style="top:408.20px;font-size:12.6px;line-height:12.6px;color:#6e6e6e;left:1284px;letter-spacing:0.42px;">c93b5606-401f-49a2-99b5-9ecbf1fa9c29</div>
<div class="t" style="top:427.02px;font-size:12.83px;line-height:12.83px;color:#636363;left:1054.4px;">Speaker Name</div>
<div class="a" style="left:1279.2px;top:424.5px;width:336.79999999999995px;height:17.0px;background:#262626;box-shadow:inset 0 0 0 1px #222222;border-radius:3px;"></div>
<div class="t" style="top:427.82px;font-size:12.7px;line-height:12.7px;color:#6e6e6e;left:1284px;">Weirdo</div>
<svg class="a" style="left:1040.6px;top:449.5px;" width="8.1" height="8" viewBox="0 0 8.1 8"><path d="M0 0h8.1L4.05 8z" fill="#606060"/></svg>
<div class="t" style="top:447.04px;font-size:13.2px;line-height:13.2px;color:#6e6e6e;left:1054.1px;">All Nodes</div>
<div class="a" style="left:1598.4px;top:443.8px;width:16.0px;height:17.399999999999977px;background:#282828;box-shadow:inset 0 0 0 1px #222;border-radius:3px;"></div>
<div class="t" style="top:447.20px;font-size:12.6px;line-height:12.6px;color:#7c7c7c;left:1602.8000000000002px;">7</div>
<div class="a" style="left:1050.8px;top:462.7px;width:564.2px;height:477px;background:#323232;box-shadow:inset 0 0 0 1px #262626;border-radius:4px;"></div>
<div class="a" style="left:1601.3px;top:464px;width:13.7px;height:474px;background:#2c2c2c;"></div>
<svg class="a" style="left:1604px;top:470px;" width="8.5" height="5" viewBox="0 0 8.5 5"><path d="M0 5h8.5L4.25 0z" fill="#8a8a8a"/></svg>
<div class="a" style="left:1603.2px;top:482.2px;width:9.9px;height:99.8px;background:#404040;border-radius:5px;"></div>
<svg class="a" style="left:1603.5px;top:927.5px;" width="8.5" height="5" viewBox="0 0 8.5 5"><path d="M0 0h8.5L4.25 5z" fill="#8a8a8a"/></svg>
<div class="a" style="left:1054px;top:472.6px;width:10.4px;height:1.2px;background:#4a4a4a;"></div>
<div class="a" style="left:1054px;top:475.8px;width:10.4px;height:1.2px;background:#4a4a4a;"></div>
<svg class="a" style="left:1068.6px;top:471.5px;" width="9.3" height="8" viewBox="0 0 9.3 8"><path d="M0 0h9.3L4.65 8z" fill="#606060"/></svg>
<div class="t" style="top:470.00px;font-size:12.6px;line-height:12.6px;color:#6e6e6e;left:1083.1px;letter-spacing:0.387px;">c93b5606-401f-49a2-99b5-9ecbf1fa9c29</div>
<div class="t" style="top:490.90px;font-size:12.08px;line-height:12.08px;color:#6e6e6e;left:1098px;">Node ID</div>
<div class="a" style="left:1279.2px;top:487.7px;width:318.5px;height:17.0px;background:#262626;box-shadow:inset 0 0 0 1px #222222;border-radius:3px;"></div>
<div class="t" style="top:490.50px;font-size:12.6px;line-height:12.6px;color:#6e6e6e;left:1284px;letter-spacing:0.392px;">c93b5606-401f-49a2-99b5-9ecbf1fa9c29</div>
<div class="t" style="top:510.45px;font-size:12.66px;line-height:12.66px;color:#6e6e6e;left:1098px;">Node Type</div>
<div class="a" style="left:1279.2px;top:508.3px;width:318.5px;height:15.599999999999966px;background:#383838;box-shadow:inset 0 0 0 1px #2c2c2c;border-radius:3px;"></div>
<div class="t" style="top:510.50px;font-size:12.6px;line-height:12.6px;color:#787878;left:1283px;">Dialogue</div>
<svg class="a" style="left:1583.5px;top:514.5px;" width="8.5" height="5" viewBox="0 0 8.5 5"><path d="M0 0h8.5L4.25 5z" fill="#8a8a8a"/></svg>
<div class="t" style="top:530.13px;font-size:13.08px;line-height:13.08px;color:#6e6e6e;left:1098px;">Next Node ID</div>
<div class="a" style="left:1279.2px;top:527.2px;width:318.5px;height:17.299999999999955px;background:#262626;box-shadow:inset 0 0 0 1px #222222;border-radius:3px;"></div>
<div class="t" style="top:530.50px;font-size:12.6px;line-height:12.6px;color:#6e6e6e;left:1284px;letter-spacing:0.476px;">7251e73e-38d3-44ff-a8c5-bcf54088aaf1</div>
<svg class="a" style="left:1097.2px;top:551.8px;" width="8" height="9" viewBox="0 0 8 9"><path d="M0 0v9l8 -4.5z" fill="#606060"/></svg>
<div class="t" style="top:550.46px;font-size:12.39px;line-height:12.39px;color:#6e6e6e;left:1110.1px;">Dialogue Lines</div>
<div class="a" style="left:1580.1px;top:547.2px;width:15.700000000000045px;height:17.299999999999955px;background:#282828;box-shadow:inset 0 0 0 1px #222;border-radius:3px;"></div>
<div class="t" style="top:550.55px;font-size:12.6px;line-height:12.6px;color:#7c7c7c;left:1584.35px;">1</div>
<div class="t" style="top:568.47px;font-size:12.9px;line-height:12.9px;color:#6e6e6e;left:1098px;">Loop Through Lines</div>
<div class="a" style="left:1279.2px;top:568.4px;width:13.700000000000045px;height:13.700000000000045px;background:#252525;box-shadow:inset 0 0 0 1px #1f1f1f;border-radius:2px;"></div>
<div class="t" style="top:589.45px;font-size:12.4px;line-height:12.4px;color:#6e6e6e;left:1098px;">Puzzle Step ID</div>
<div class="a" style="left:1279.2px;top:586.5px;width:318.5px;height:17.0px;background:#262626;box-shadow:inset 0 0 0 1px #222222;border-radius:3px;"></div>
<div class="t" style="top:609.68px;font-size:12.5px;line-height:12.5px;color:#6e6e6e;left:1098px;">Pickup Item ID</div>
<div class="a" style="left:1279.2px;top:606.2px;width:318.5px;height:17.0px;background:#262626;box-shadow:inset 0 0 0 1px #222222;border-radius:3px;"></div>
<div class="t" style="top:629.68px;font-size:12.5px;line-height:12.5px;color:#6e6e6e;left:1098px;">Slot Item ID</div>
<div class="a" style="left:1279.2px;top:626.3px;width:318.5px;height:17.800000000000068px;background:#262626;box-shadow:inset 0 0 0 1px #222222;border-radius:3px;"></div>
<div class="t" style="top:649.67px;font-size:12.51px;line-height:12.51px;color:#6e6e6e;left:1098px;">Combination Result Item ID</div>
<div class="a" style="left:1279.2px;top:646px;width:318.5px;height:17.299999999999955px;background:#262626;box-shadow:inset 0 0 0 1px #222222;border-radius:3px;"></div>
<svg class="a" style="left:1097.2px;top:671.1px;" width="8" height="9" viewBox="0 0 8 9"><path d="M0 0v9l8 -4.5z" fill="#606060"/></svg>
<div class="t" style="top:669.63px;font-size:12.56px;line-height:12.56px;color:#6e6e6e;left:1110.1px;">Incorrect Item Lines</div>
<div class="a" style="left:1578px;top:666px;width:17.799999999999955px;height:17.899999999999977px;background:#282828;box-shadow:inset 0 0 0 1px #222;border-radius:3px;"></div>
<div class="t" style="top:669.65px;font-size:12.6px;line-height:12.6px;color:#7c7c7c;left:1583.3000000000002px;">0</div>
<div class="t" style="top:687.37px;font-size:12.76px;line-height:12.76px;color:#6e6e6e;left:1098px;">Loop Through Incorrect Lines</div>
<div class="a" style="left:1279.2px;top:687.2px;width:13.699999999999932px;height:13.699999999999932px;background:#252525;box-shadow:inset 0 0 0 1px #1f1f1f;border-radius:2px;"></div>
<svg class="a" style="left:1097.2px;top:710.1px;" width="8" height="9" viewBox="0 0 8 9"><path d="M0 0v9l8 -4.5z" fill="#606060"/></svg>
<div class="t" style="top:708.76px;font-size:12.39px;line-height:12.39px;color:#6e6e6e;left:1110.1px;">Forbidden Item Lines</div>
<div class="a" style="left:1578px;top:705px;width:17.799999999999955px;height:17.899999999999977px;background:#282828;box-shadow:inset 0 0 0 1px #222;border-radius:3px;"></div>
<div class="t" style="top:708.65px;font-size:12.6px;line-height:12.6px;color:#7c7c7c;left:1583.3000000000002px;">0</div>
<div class="t" style="top:726.44px;font-size:12.67px;line-height:12.67px;color:#6e6e6e;left:1098px;">Loop Through Forbidden Lines</div>
<div class="a" style="left:1279.2px;top:726.2px;width:13.699999999999932px;height:13.699999999999932px;background:#252525;box-shadow:inset 0 0 0 1px #1f1f1f;border-radius:2px;"></div>
<div class="a" style="left:1053.6px;top:751.8px;width:10.4px;height:1.2px;background:#4a4a4a;"></div>
<div class="a" style="left:1053.6px;top:755.0px;width:10.4px;height:1.2px;background:#4a4a4a;"></div>
<svg class="a" style="left:1069.2px;top:750.5px;" width="9.2" height="8" viewBox="0 0 9.2 8"><path d="M0 0h9.2L4.6 8z" fill="#606060"/></svg>
<div class="t" style="top:749.10px;font-size:12.6px;line-height:12.6px;color:#6e6e6e;left:1082.8px;letter-spacing:0.365px;">7251e73e-38d3-44ff-a8c5-bcf54088aaf1</div>
<div class="t" style="top:769.90px;font-size:12.08px;line-height:12.08px;color:#6e6e6e;left:1098px;">Node ID</div>
<div class="a" style="left:1279.2px;top:766px;width:318.5px;height:18.100000000000023px;background:#262626;box-shadow:inset 0 0 0 1px #222222;border-radius:3px;"></div>
<div class="t" style="top:769.50px;font-size:12.6px;line-height:12.6px;color:#6e6e6e;left:1284px;letter-spacing:0.476px;">7251e73e-38d3-44ff-a8c5-bcf54088aaf1</div>
<div class="t" style="top:788.95px;font-size:12.66px;line-height:12.66px;color:#6e6e6e;left:1098px;">Node Type</div>
<div class="a" style="left:1279.2px;top:787.1px;width:318.5px;height:16.100000000000023px;background:#383838;box-shadow:inset 0 0 0 1px #2c2c2c;border-radius:3px;"></div>
<div class="t" style="top:789.00px;font-size:12.6px;line-height:12.6px;color:#787878;left:1283px;">Wait On Pickup</div>
<svg class="a" style="left:1583.5px;top:793px;" width="8.5" height="5" viewBox="0 0 8.5 5"><path d="M0 0h8.5L4.25 5z" fill="#8a8a8a"/></svg>
<div class="t" style="top:808.73px;font-size:13.08px;line-height:13.08px;color:#6e6e6e;left:1098px;">Next Node ID</div>
<div class="a" style="left:1279.2px;top:806.5px;width:318.5px;height:17.299999999999955px;background:#262626;box-shadow:inset 0 0 0 1px #222222;border-radius:3px;"></div>
<div class="t" style="top:809.10px;font-size:12.6px;line-height:12.6px;color:#6e6e6e;left:1284px;letter-spacing:0.373px;">f22a475e-4c2f-41c6-9b73-6a83498abfe0</div>
<svg class="a" style="left:1095.7px;top:831.5px;" width="9.2" height="8" viewBox="0 0 9.2 8"><path d="M0 0h9.2L4.6 8z" fill="#606060"/></svg>
<div class="t" style="top:829.66px;font-size:12.39px;line-height:12.39px;color:#6e6e6e;left:1110.1px;">Dialogue Lines</div>
<div class="a" style="left:1578.4px;top:826.3px;width:17.299999999999955px;height:16.600000000000023px;background:#282828;box-shadow:inset 0 0 0 1px #222;border-radius:3px;"></div>
<div class="t" style="top:829.30px;font-size:12.6px;line-height:12.6px;color:#7c7c7c;left:1583.4500000000003px;">3</div>
<div class="a" style="left:1094.5px;top:844.6px;width:501.2px;height:70.9px;background:#323232;box-shadow:inset 0 0 0 1px #242424;border-radius:3px;"></div>
<div class="a" style="left:1098.2px;top:855.1px;width:9.9px;height:1.2px;background:#444;"></div>
<div class="a" style="left:1098.2px;top:858.3000000000001px;width:9.9px;height:1.2px;background:#444;"></div>
<div class="t" style="top:852.62px;font-size:12.44px;line-height:12.44px;color:#6e6e6e;left:1127.2px;">Element 0</div>
<div class="a" style="left:1279.2px;top:849.1px;width:312.29999999999995px;height:17.899999999999977px;background:#262626;box-shadow:inset 0 0 0 1px #222222;border-radius:3px;"></div>
<div class="t" style="top:852.50px;font-size:12.6px;line-height:12.6px;color:#6e6e6e;left:1284px;letter-spacing:0.092px;">I said pick it up!</div>
<div class="a" style="left:1098.2px;top:877.2px;width:9.9px;height:1.2px;background:#444;"></div>
<div class="a" style="left:1098.2px;top:880.4000000000001px;width:9.9px;height:1.2px;background:#444;"></div>
<div class="t" style="top:874.72px;font-size:12.44px;line-height:12.44px;color:#6e6e6e;left:1127.2px;">Element 1</div>
<div class="a" style="left:1279.2px;top:871.4px;width:312.29999999999995px;height:17.399999999999977px;background:#262626;box-shadow:inset 0 0 0 1px #222222;border-radius:3px;"></div>
<div class="t" style="top:874.60px;font-size:12.6px;line-height:12.6px;color:#6e6e6e;left:1284px;letter-spacing:0.101px;">Cmon, don't be like this!</div>
<div class="a" style="left:1098.2px;top:899.0px;width:9.9px;height:1.2px;background:#444;"></div>
<div class="a" style="left:1098.2px;top:902.2px;width:9.9px;height:1.2px;background:#444;"></div>
<div class="t" style="top:896.52px;font-size:12.44px;line-height:12.44px;color:#6e6e6e;left:1127.2px;">Element 2</div>
<div class="a" style="left:1279.2px;top:893.2px;width:312.29999999999995px;height:17.399999999999977px;background:#262626;box-shadow:inset 0 0 0 1px #222222;border-radius:3px;"></div>
<div class="t" style="top:896.40px;font-size:12.6px;line-height:12.6px;color:#6e6e6e;left:1284px;letter-spacing:0.107px;">The ass is waiting there for you!</div>
<div class="a" style="left:1528.8px;top:915px;width:52.8px;height:22.1px;background:#303030;box-shadow:inset 0 0 0 1px #242424;border-radius:0 0 3px 3px;"></div>
<svg class="a" style="left:1539.4px;top:923px;" width="9.2" height="9.2" viewBox="0 0 9.2 9.2"><path d="M4.6 0v9.2M0 4.6h9.2" stroke="#8a8a8a" stroke-width="1.5"/></svg>
<div class="a" style="left:1562.5px;top:927.2px;width:6.7px;height:1.2px;background:#8a8a8a;"></div>
<div class="a" style="left:1547.6px;top:940px;width:52.6px;height:22.4px;background:#2e2e2e;box-shadow:inset 0 0 0 1px #242424;border-radius:0 0 3px 3px;"></div>
<svg class="a" style="left:1558.4px;top:947.9px;" width="9.2" height="9.2" viewBox="0 0 9.2 9.2"><path d="M4.6 0v9.2M0 4.6h9.2" stroke="#8a8a8a" stroke-width="1.5"/></svg>
<div class="a" style="left:1581.5px;top:952.2px;width:6.7px;height:1.2px;background:#8a8a8a;"></div>
<div class="a" style="left:1035px;top:977px;width:585px;height:1.2px;background:#141414;"></div>
<div class="a" style="left:1035px;top:978.2px;width:585px;height:5.8px;background:#323232;"></div>
</div></body></html>
